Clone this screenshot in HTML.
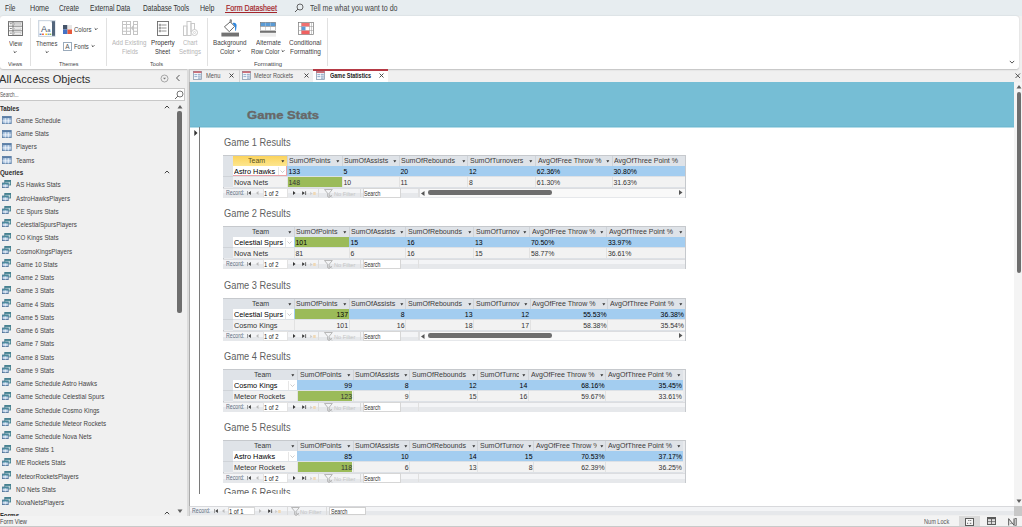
<!DOCTYPE html>
<html><head><meta charset="utf-8"><style>
html,body{margin:0;padding:0;}
body{width:1022px;height:527px;overflow:hidden;position:relative;background:#f0f0f0;font-family:"Liberation Sans",sans-serif;}
body>div,body>svg{position:absolute;}
.t{white-space:pre;line-height:1;transform-origin:0 0;}
</style></head><body>
<div style="left:0px;top:0px;width:1022px;height:16px;background:#e7edf0;"></div>
<div style="left:0px;top:69px;width:1022px;height:458px;background:#f0f0f0;"></div>
<div style="left:0px;top:15.7px;width:1019px;height:53px;background:#fff;border-radius:3px;box-shadow:0 0.6px 1.5px rgba(0,0,0,0.2);"></div>
<div class="t" style="left:5.00px;top:5.06px;font-size:8.2px;color:#333;transform:scaleX(0.7945);">File</div>
<div class="t" style="left:30.00px;top:5.06px;font-size:8.2px;color:#333;transform:scaleX(0.8685);">Home</div>
<div class="t" style="left:59.00px;top:5.06px;font-size:8.2px;color:#333;transform:scaleX(0.8126);">Create</div>
<div class="t" style="left:90.40px;top:5.06px;font-size:8.2px;color:#333;transform:scaleX(0.8112);">External Data</div>
<div class="t" style="left:142.50px;top:5.06px;font-size:8.2px;color:#333;transform:scaleX(0.8195);">Database Tools</div>
<div class="t" style="left:200.30px;top:5.06px;font-size:8.2px;color:#333;transform:scaleX(0.8596);">Help</div>
<div class="t" style="left:225.50px;top:5.06px;font-size:8.2px;color:#a4262c;transform:scaleX(0.8675);-webkit-text-stroke:0.2px #a4262c;">Form Datasheet</div>
<div style="left:225px;top:12.2px;width:52px;height:1.2px;background:#a4262c;"></div>
<div class="t" style="left:310.00px;top:5.06px;font-size:8.2px;color:#444;transform:scaleX(0.8667);">Tell me what you want to do</div>
<svg style="left:294px;top:3px" width="10" height="10" viewBox="0 0 10 10"><circle cx="6" cy="4" r="3" fill="none" stroke="#555" stroke-width="0.9"/><line x1="3.9" y1="6.1" x2="1" y2="9" stroke="#555" stroke-width="1"/></svg>
<div style="left:29.9px;top:18px;width:1px;height:48px;background:#e1e1e1;"></div>
<div style="left:106.3px;top:18px;width:1px;height:48px;background:#e1e1e1;"></div>
<div style="left:207px;top:18px;width:1px;height:48px;background:#e1e1e1;"></div>
<div style="left:327px;top:18px;width:1px;height:48px;background:#e1e1e1;"></div>
<div class="t" style="left:8.00px;top:60.82px;font-size:6.0px;color:#3f3f3f;transform:scaleX(0.8931);">Views</div>
<div class="t" style="left:59.00px;top:60.82px;font-size:6.0px;color:#3f3f3f;transform:scaleX(0.8997);">Themes</div>
<div class="t" style="left:150.00px;top:60.82px;font-size:6.0px;color:#3f3f3f;transform:scaleX(0.9278);">Tools</div>
<div class="t" style="left:253.50px;top:60.82px;font-size:6.0px;color:#3f3f3f;transform:scaleX(0.9764);">Formatting</div>
<div class="t" style="left:8.70px;top:39.81px;font-size:7.2px;color:#444;transform:scaleX(0.8527);">View</div>
<div class="t" style="left:36.00px;top:39.81px;font-size:7.2px;color:#444;transform:scaleX(0.8228);">Themes</div>
<div class="t" style="left:73.90px;top:26.21px;font-size:7.2px;color:#444;transform:scaleX(0.8411);">Colors</div>
<div class="t" style="left:73.90px;top:43.21px;font-size:7.2px;color:#444;transform:scaleX(0.8217);">Fonts</div>
<div class="t" style="left:112.40px;top:39.41px;font-size:7.2px;color:#b5b5b5;transform:scaleX(0.8595);">Add Existing</div>
<div class="t" style="left:121.50px;top:47.91px;font-size:7.2px;color:#b5b5b5;transform:scaleX(0.8329);">Fields</div>
<div class="t" style="left:151.00px;top:39.41px;font-size:7.2px;color:#333;transform:scaleX(0.8746);">Property</div>
<div class="t" style="left:155.00px;top:47.91px;font-size:7.2px;color:#333;transform:scaleX(0.7972);">Sheet</div>
<div class="t" style="left:183.00px;top:39.41px;font-size:7.2px;color:#b5b5b5;transform:scaleX(0.8236);">Chart</div>
<div class="t" style="left:179.00px;top:47.91px;font-size:7.2px;color:#b5b5b5;transform:scaleX(0.8456);">Settings</div>
<div class="t" style="left:213.00px;top:39.41px;font-size:7.2px;color:#444;transform:scaleX(0.8743);">Background</div>
<div class="t" style="left:220.00px;top:47.91px;font-size:7.2px;color:#444;transform:scaleX(0.8427);">Color</div>
<div class="t" style="left:255.80px;top:39.41px;font-size:7.2px;color:#444;transform:scaleX(0.8674);">Alternate</div>
<div class="t" style="left:250.90px;top:47.91px;font-size:7.2px;color:#444;transform:scaleX(0.8480);">Row Color</div>
<div class="t" style="left:289.40px;top:39.41px;font-size:7.2px;color:#444;transform:scaleX(0.8993);">Conditional</div>
<div class="t" style="left:290.00px;top:47.91px;font-size:7.2px;color:#444;transform:scaleX(0.9008);">Formatting</div>
<svg style="left:12.3px;top:49.5px" width="6" height="4" viewBox="0 0 6 4"><polyline points="1.7,1.35 3,2.65 4.3,1.35" fill="none" stroke="#333" stroke-width="1"/></svg>
<svg style="left:43.8px;top:49.5px" width="6" height="4" viewBox="0 0 6 4"><polyline points="1.7,1.35 3,2.65 4.3,1.35" fill="none" stroke="#333" stroke-width="1"/></svg>
<svg style="left:92.6px;top:27.4px" width="6" height="4" viewBox="0 0 6 4"><polyline points="1.7,1.35 3,2.65 4.3,1.35" fill="none" stroke="#333" stroke-width="1"/></svg>
<svg style="left:90px;top:44.4px" width="6" height="4" viewBox="0 0 6 4"><polyline points="1.7,1.35 3,2.65 4.3,1.35" fill="none" stroke="#333" stroke-width="1"/></svg>
<svg style="left:236px;top:48.7px" width="6" height="4" viewBox="0 0 6 4"><polyline points="1.7,1.35 3,2.65 4.3,1.35" fill="none" stroke="#333" stroke-width="1"/></svg>
<svg style="left:280px;top:48.7px" width="6" height="4" viewBox="0 0 6 4"><polyline points="1.7,1.35 3,2.65 4.3,1.35" fill="none" stroke="#333" stroke-width="1"/></svg>
<svg style="left:1008.6px;top:59.5px" width="6" height="4" viewBox="0 0 6 4"><polyline points="0.7999999999999998,0.8999999999999999 3,3.1 5.2,0.8999999999999999" fill="none" stroke="#555" stroke-width="1"/></svg>
<svg style="left:8px;top:20.6px" width="15" height="15" viewBox="0 0 15 15">
<rect x="0.5" y="0.5" width="14" height="14" fill="#fff" stroke="#707070"/>
<rect x="0.5" y="0.5" width="14" height="1" fill="#9a9a9a"/>
<line x1="5" y1="0.5" x2="5" y2="14.5" stroke="#707070" stroke-width="0.9"/>
<line x1="0.5" y1="5.2" x2="14.5" y2="5.2" stroke="#707070" stroke-width="0.9"/>
<line x1="0.5" y1="9.8" x2="14.5" y2="9.8" stroke="#707070" stroke-width="0.9"/>
<rect x="6.5" y="2.3" width="6.5" height="1.5" fill="none" stroke="#b0b0b0" stroke-width="0.6"/><rect x="6.5" y="7" width="6.5" height="1.5" fill="none" stroke="#b0b0b0" stroke-width="0.6"/><rect x="6.5" y="11.6" width="6.5" height="1.5" fill="none" stroke="#b0b0b0" stroke-width="0.6"/>
<rect x="1.8" y="2.4" width="2" height="0.8" fill="#666"/><rect x="1.8" y="7.1" width="2" height="0.8" fill="#666"/><rect x="1.8" y="11.7" width="2" height="0.8" fill="#666"/>
</svg>
<svg style="left:38.3px;top:19.8px" width="18" height="17" viewBox="0 0 18 17">
<rect x="0" y="0" width="17.5" height="17" fill="#cfd8e2"/>
<rect x="1.3" y="1.2" width="12.7" height="14.6" fill="#fff"/>
<rect x="14" y="1.2" width="3" height="14.6" fill="#52657c"/>
<path d="M12.2 1.2 L14 1.2 L14 3 Z" fill="#b9c6d4"/>
<text x="3" y="11.5" font-family="Liberation Sans" font-size="9" fill="#44546a">A</text>
<text x="9.3" y="11.6" font-family="Liberation Sans" font-size="5.8" fill="#44546a">a</text>
<rect x="1.6" y="13.6" width="1.9" height="1.3" fill="#4472c4"/><rect x="4" y="13.6" width="1.9" height="1.3" fill="#e8553e"/><rect x="7.3" y="13.6" width="1.9" height="1.3" fill="#ffc000"/><rect x="9.6" y="13.6" width="1.9" height="1.3" fill="#5b9bd5"/><rect x="11.8" y="13.6" width="1.5" height="1.3" fill="#70ad47"/>
</svg>
<svg style="left:63px;top:24.5px" width="9" height="9" viewBox="0 0 9 9">
<rect x="0" y="0" width="4.5" height="4.5" fill="#44546a"/><rect x="4.5" y="0" width="4.5" height="4.5" fill="#e7e6e6"/>
<rect x="0" y="4.5" width="4.5" height="4.5" fill="#4472c4"/><rect x="4.5" y="4.5" width="4.5" height="4.5" fill="#e65a3c"/>
</svg>
<svg style="left:63px;top:42px" width="9" height="9" viewBox="0 0 9 9">
<rect x="0.5" y="0.5" width="8" height="8" fill="#fff" stroke="#9aaabb"/>
<text x="2.2" y="7.2" font-family="Liberation Sans" font-size="6.5" fill="#555">A</text>
</svg>
<svg style="left:122px;top:21px" width="16" height="14" viewBox="0 0 16 14">
<rect x="0.5" y="0.5" width="8" height="13" fill="none" stroke="#c4c4c4"/>
<line x1="0.5" y1="3.5" x2="8.5" y2="3.5" stroke="#c4c4c4"/><line x1="0.5" y1="7" x2="8.5" y2="7" stroke="#c4c4c4"/><line x1="0.5" y1="10.3" x2="8.5" y2="10.3" stroke="#c4c4c4"/><line x1="4.5" y1="0.5" x2="4.5" y2="13.5" stroke="#c4c4c4"/>
<rect x="11.5" y="0.5" width="4" height="13" fill="none" stroke="#c4c4c4"/>
<line x1="11.5" y1="3.5" x2="15.5" y2="3.5" stroke="#c4c4c4"/><line x1="11.5" y1="7" x2="15.5" y2="7" stroke="#c4c4c4"/><line x1="11.5" y1="10.3" x2="15.5" y2="10.3" stroke="#c4c4c4"/>
<path d="M11 4.5 L8.8 7 L11 9.5 Z" fill="#c4c4c4"/>
</svg>
<svg style="left:157px;top:20.5px" width="12" height="15" viewBox="0 0 12 15">
<rect x="0.5" y="0.5" width="11" height="14" fill="#fff" stroke="#6a6a6a" stroke-width="0.9"/>
<circle cx="3" cy="4" r="0.9" fill="none" stroke="#666" stroke-width="0.7"/><line x1="4.5" y1="4" x2="9.5" y2="4" stroke="#777" stroke-width="0.8"/>
<circle cx="3" cy="7" r="0.9" fill="none" stroke="#666" stroke-width="0.7"/><line x1="4.5" y1="7" x2="9.5" y2="7" stroke="#777" stroke-width="0.8"/>
<circle cx="3" cy="10" r="0.9" fill="none" stroke="#666" stroke-width="0.7"/><line x1="4.5" y1="10" x2="9.5" y2="10" stroke="#777" stroke-width="0.8"/>
</svg>
<svg style="left:183px;top:21px" width="16" height="16" viewBox="0 0 16 16">
<rect x="0.5" y="5" width="3.5" height="9.5" fill="none" stroke="#c9c9c9"/>
<rect x="4" y="0.5" width="4" height="14" fill="none" stroke="#c9c9c9"/>
<rect x="8" y="2.5" width="3.5" height="8" fill="none" stroke="#c9c9c9"/>
<circle cx="11.5" cy="11.5" r="3" fill="#fff" stroke="#c9c9c9"/><circle cx="11.5" cy="11.5" r="1" fill="none" stroke="#c9c9c9" stroke-width="0.7"/>
</svg>
<svg style="left:221px;top:19px" width="19" height="18" viewBox="0 0 19 18">
<path d="M3.4 7.8 L9.2 2.9 L13.6 7.3 L8.3 12.7 Z" fill="#fff" stroke="#555" stroke-width="0.9" stroke-linejoin="round"/>
<path d="M9.2 2.9 L9.2 0.8 L10.3 0.8 L10.3 3.6" fill="none" stroke="#555" stroke-width="0.8"/>
<path d="M11.5 4.2 C13.5 3.2 15.5 4.2 15.6 6.5 L15 11.8 L14.2 11.8 L13.9 7.6 Z" fill="#2f86dd"/>
<rect x="0.4" y="13.6" width="17.6" height="3.9" fill="#737373"/>
</svg>
<svg style="left:260px;top:22px" width="16" height="15" viewBox="0 0 16 15">
<rect x="0.5" y="0.5" width="15" height="4" fill="#5b9bd5" stroke="#6d6d6d" stroke-width="0.6"/>
<line x1="5.5" y1="0.5" x2="5.5" y2="4.5" stroke="#bcd" stroke-width="0.5"/><line x1="10.5" y1="0.5" x2="10.5" y2="4.5" stroke="#bcd" stroke-width="0.5"/>
<rect x="0.5" y="4.5" width="15" height="4" fill="#fff" stroke="#9a9a9a" stroke-width="0.6"/>
<line x1="5.5" y1="4.5" x2="5.5" y2="8.5" stroke="#aaa" stroke-width="0.5"/><line x1="10.5" y1="4.5" x2="10.5" y2="8.5" stroke="#aaa" stroke-width="0.5"/>
<rect x="0" y="9" width="16" height="1.8" fill="#707070"/>
<rect x="-1" y="11.2" width="18" height="3.5" fill="#ededed"/>
</svg>
<svg style="left:298px;top:22px" width="16" height="13" viewBox="0 0 16 13">
<rect x="0.5" y="0.5" width="15" height="12" fill="#fff" stroke="#777" stroke-width="0.7"/>
<line x1="0.5" y1="4.5" x2="15.5" y2="4.5" stroke="#999" stroke-width="0.5"/><line x1="0.5" y1="8.5" x2="15.5" y2="8.5" stroke="#999" stroke-width="0.5"/>
<line x1="3.5" y1="0.5" x2="3.5" y2="12.5" stroke="#999" stroke-width="0.5"/><line x1="11.5" y1="0.5" x2="11.5" y2="12.5" stroke="#999" stroke-width="0.5"/><line x1="13.5" y1="0.5" x2="13.5" y2="12.5" stroke="#999" stroke-width="0.5"/>
<rect x="3.5" y="1" width="8" height="3.4" fill="#f07070"/>
<rect x="3.5" y="4.6" width="4" height="3.8" fill="#5b9bd5"/>
<rect x="3.5" y="8.6" width="8" height="3.6" fill="#f06060"/>
</svg>
<div style="left:187px;top:69px;width:2px;height:447px;background:#dcdcdc;"></div>
<div style="left:188.5px;top:69px;width:1px;height:447px;background:#c8c8c8;"></div>
<div class="t" style="left:-0.80px;top:73.77px;font-size:11.5px;color:#2f2f2f;transform:scaleX(0.9662);">All Access Objects</div>
<svg style="left:160px;top:73.5px" width="9" height="9" viewBox="0 0 9 9"><circle cx="4.5" cy="4.5" r="3.5" fill="none" stroke="#888" stroke-width="0.7"/><path d="M3 3.8 L6 3.8 L4.5 5.6 Z" fill="#777"/></svg>
<svg style="left:175px;top:74px" width="6" height="8" viewBox="0 0 6 8"><polyline points="4.5,1 1.5,4 4.5,7" fill="none" stroke="#444" stroke-width="0.9"/></svg>
<div style="left:0px;top:88px;width:185px;height:12.5px;background:#fff;box-sizing:border-box;border:1px solid #c8c8c8;border-left:none;"></div>
<div class="t" style="left:0.00px;top:92.18px;font-size:6.4px;color:#555;transform:scaleX(0.7261);">Search...</div>
<svg style="left:174px;top:89.5px" width="10" height="10" viewBox="0 0 10 10"><circle cx="6" cy="4" r="3" fill="none" stroke="#555" stroke-width="0.8"/><line x1="3.9" y1="6.1" x2="1" y2="9" stroke="#555" stroke-width="0.9"/></svg>
<svg style="left:177px;top:104px" width="6" height="5" viewBox="0 0 6 5"><path d="M0.5 4.5 L3 1 L5.5 4.5 Z" fill="#606060"/></svg>
<div style="left:177.4px;top:111px;width:4.4px;height:202px;background:#6e6e6e;border-radius:2px;"></div>
<svg style="left:177px;top:509px" width="6" height="5" viewBox="0 0 6 5"><path d="M0.5 0.5 L3 4 L5.5 0.5 Z" fill="#606060"/></svg>
<svg style="left:163.5px;top:105px" width="6" height="4" viewBox="0 0 6 4"><polyline points="0.8,3.2 3,1 5.2,3.2" fill="none" stroke="#444" stroke-width="1"/></svg>
<svg style="left:163.5px;top:169.5px" width="6" height="4" viewBox="0 0 6 4"><polyline points="0.8,3.2 3,1 5.2,3.2" fill="none" stroke="#444" stroke-width="1"/></svg>
<svg style="left:163.5px;top:511px" width="6" height="4" viewBox="0 0 6 4"><polyline points="0.8,3.2 3,1 5.2,3.2" fill="none" stroke="#444" stroke-width="1"/></svg>
<div class="t" style="left:0.10px;top:105.64px;font-size:6.8px;color:#2b2b2b;font-weight:700;transform:scaleX(0.9174);">Tables</div>
<svg style="left:1.5px;top:116.3px" width="10" height="8" viewBox="0 0 10 8"><rect x="0.4" y="0.4" width="8.8" height="7.2" fill="#a9c3e0" stroke="#5b7ea6" stroke-width="0.8"/><rect x="0.4" y="0.4" width="8.8" height="1.8" fill="#5b7ea6"/><line x1="3.3" y1="2.2" x2="3.3" y2="7.6" stroke="#fff" stroke-width="0.7"/><line x1="6.3" y1="2.2" x2="6.3" y2="7.6" stroke="#fff" stroke-width="0.7"/><line x1="0.4" y1="4.9" x2="9.2" y2="4.9" stroke="#fff" stroke-width="0.7"/></svg>
<div class="t" style="left:16.10px;top:117.93px;font-size:6.7px;color:#444;transform:scaleX(0.9320);">Game Schedule</div>
<svg style="left:1.5px;top:129.57px" width="10" height="8" viewBox="0 0 10 8"><rect x="0.4" y="0.4" width="8.8" height="7.2" fill="#a9c3e0" stroke="#5b7ea6" stroke-width="0.8"/><rect x="0.4" y="0.4" width="8.8" height="1.8" fill="#5b7ea6"/><line x1="3.3" y1="2.2" x2="3.3" y2="7.6" stroke="#fff" stroke-width="0.7"/><line x1="6.3" y1="2.2" x2="6.3" y2="7.6" stroke="#fff" stroke-width="0.7"/><line x1="0.4" y1="4.9" x2="9.2" y2="4.9" stroke="#fff" stroke-width="0.7"/></svg>
<div class="t" style="left:16.10px;top:131.20px;font-size:6.7px;color:#444;transform:scaleX(0.9320);">Game Stats</div>
<svg style="left:1.5px;top:142.83999999999997px" width="10" height="8" viewBox="0 0 10 8"><rect x="0.4" y="0.4" width="8.8" height="7.2" fill="#a9c3e0" stroke="#5b7ea6" stroke-width="0.8"/><rect x="0.4" y="0.4" width="8.8" height="1.8" fill="#5b7ea6"/><line x1="3.3" y1="2.2" x2="3.3" y2="7.6" stroke="#fff" stroke-width="0.7"/><line x1="6.3" y1="2.2" x2="6.3" y2="7.6" stroke="#fff" stroke-width="0.7"/><line x1="0.4" y1="4.9" x2="9.2" y2="4.9" stroke="#fff" stroke-width="0.7"/></svg>
<div class="t" style="left:16.10px;top:144.47px;font-size:6.7px;color:#444;transform:scaleX(0.9320);">Players</div>
<svg style="left:1.5px;top:156.10999999999999px" width="10" height="8" viewBox="0 0 10 8"><rect x="0.4" y="0.4" width="8.8" height="7.2" fill="#a9c3e0" stroke="#5b7ea6" stroke-width="0.8"/><rect x="0.4" y="0.4" width="8.8" height="1.8" fill="#5b7ea6"/><line x1="3.3" y1="2.2" x2="3.3" y2="7.6" stroke="#fff" stroke-width="0.7"/><line x1="6.3" y1="2.2" x2="6.3" y2="7.6" stroke="#fff" stroke-width="0.7"/><line x1="0.4" y1="4.9" x2="9.2" y2="4.9" stroke="#fff" stroke-width="0.7"/></svg>
<div class="t" style="left:16.10px;top:157.74px;font-size:6.7px;color:#444;transform:scaleX(0.9320);">Teams</div>
<div class="t" style="left:0.10px;top:170.04px;font-size:6.8px;color:#2b2b2b;font-weight:700;transform:scaleX(0.9200);">Queries</div>
<svg style="left:1.5px;top:179.7px" width="9" height="8" viewBox="0 0 9 8"><rect x="2.8" y="0.4" width="5.8" height="4.6" fill="#b5d6d6" stroke="#3d7a8a" stroke-width="0.8"/><rect x="2.8" y="0.4" width="5.8" height="1.4" fill="#3d7a8a"/><rect x="0.4" y="3" width="5.8" height="4.6" fill="#a9c3e0" stroke="#4a6f96" stroke-width="0.8"/><rect x="0.4" y="3" width="5.8" height="1.4" fill="#4a8a9a"/><line x1="0.4" y1="5.9" x2="6.2" y2="5.9" stroke="#fff" stroke-width="0.6"/><line x1="3.3" y1="4.4" x2="3.3" y2="7.6" stroke="#fff" stroke-width="0.6"/></svg>
<div class="t" style="left:16.10px;top:182.43px;font-size:6.7px;color:#444;transform:scaleX(0.9320);">AS Hawks Stats</div>
<svg style="left:1.5px;top:192.94px" width="9" height="8" viewBox="0 0 9 8"><rect x="2.8" y="0.4" width="5.8" height="4.6" fill="#b5d6d6" stroke="#3d7a8a" stroke-width="0.8"/><rect x="2.8" y="0.4" width="5.8" height="1.4" fill="#3d7a8a"/><rect x="0.4" y="3" width="5.8" height="4.6" fill="#a9c3e0" stroke="#4a6f96" stroke-width="0.8"/><rect x="0.4" y="3" width="5.8" height="1.4" fill="#4a8a9a"/><line x1="0.4" y1="5.9" x2="6.2" y2="5.9" stroke="#fff" stroke-width="0.6"/><line x1="3.3" y1="4.4" x2="3.3" y2="7.6" stroke="#fff" stroke-width="0.6"/></svg>
<div class="t" style="left:16.10px;top:195.67px;font-size:6.7px;color:#444;transform:scaleX(0.9320);">AstroHawksPlayers</div>
<svg style="left:1.5px;top:206.17999999999998px" width="9" height="8" viewBox="0 0 9 8"><rect x="2.8" y="0.4" width="5.8" height="4.6" fill="#b5d6d6" stroke="#3d7a8a" stroke-width="0.8"/><rect x="2.8" y="0.4" width="5.8" height="1.4" fill="#3d7a8a"/><rect x="0.4" y="3" width="5.8" height="4.6" fill="#a9c3e0" stroke="#4a6f96" stroke-width="0.8"/><rect x="0.4" y="3" width="5.8" height="1.4" fill="#4a8a9a"/><line x1="0.4" y1="5.9" x2="6.2" y2="5.9" stroke="#fff" stroke-width="0.6"/><line x1="3.3" y1="4.4" x2="3.3" y2="7.6" stroke="#fff" stroke-width="0.6"/></svg>
<div class="t" style="left:16.10px;top:208.91px;font-size:6.7px;color:#444;transform:scaleX(0.9320);">CE Spurs Stats</div>
<svg style="left:1.5px;top:219.42px" width="9" height="8" viewBox="0 0 9 8"><rect x="2.8" y="0.4" width="5.8" height="4.6" fill="#b5d6d6" stroke="#3d7a8a" stroke-width="0.8"/><rect x="2.8" y="0.4" width="5.8" height="1.4" fill="#3d7a8a"/><rect x="0.4" y="3" width="5.8" height="4.6" fill="#a9c3e0" stroke="#4a6f96" stroke-width="0.8"/><rect x="0.4" y="3" width="5.8" height="1.4" fill="#4a8a9a"/><line x1="0.4" y1="5.9" x2="6.2" y2="5.9" stroke="#fff" stroke-width="0.6"/><line x1="3.3" y1="4.4" x2="3.3" y2="7.6" stroke="#fff" stroke-width="0.6"/></svg>
<div class="t" style="left:16.10px;top:222.15px;font-size:6.7px;color:#444;transform:scaleX(0.9320);">CelestialSpursPlayers</div>
<svg style="left:1.5px;top:232.66px" width="9" height="8" viewBox="0 0 9 8"><rect x="2.8" y="0.4" width="5.8" height="4.6" fill="#b5d6d6" stroke="#3d7a8a" stroke-width="0.8"/><rect x="2.8" y="0.4" width="5.8" height="1.4" fill="#3d7a8a"/><rect x="0.4" y="3" width="5.8" height="4.6" fill="#a9c3e0" stroke="#4a6f96" stroke-width="0.8"/><rect x="0.4" y="3" width="5.8" height="1.4" fill="#4a8a9a"/><line x1="0.4" y1="5.9" x2="6.2" y2="5.9" stroke="#fff" stroke-width="0.6"/><line x1="3.3" y1="4.4" x2="3.3" y2="7.6" stroke="#fff" stroke-width="0.6"/></svg>
<div class="t" style="left:16.10px;top:235.39px;font-size:6.7px;color:#444;transform:scaleX(0.9320);">CO Kings Stats</div>
<svg style="left:1.5px;top:245.9px" width="9" height="8" viewBox="0 0 9 8"><rect x="2.8" y="0.4" width="5.8" height="4.6" fill="#b5d6d6" stroke="#3d7a8a" stroke-width="0.8"/><rect x="2.8" y="0.4" width="5.8" height="1.4" fill="#3d7a8a"/><rect x="0.4" y="3" width="5.8" height="4.6" fill="#a9c3e0" stroke="#4a6f96" stroke-width="0.8"/><rect x="0.4" y="3" width="5.8" height="1.4" fill="#4a8a9a"/><line x1="0.4" y1="5.9" x2="6.2" y2="5.9" stroke="#fff" stroke-width="0.6"/><line x1="3.3" y1="4.4" x2="3.3" y2="7.6" stroke="#fff" stroke-width="0.6"/></svg>
<div class="t" style="left:16.10px;top:248.63px;font-size:6.7px;color:#444;transform:scaleX(0.9320);">CosmoKingsPlayers</div>
<svg style="left:1.5px;top:259.14px" width="9" height="8" viewBox="0 0 9 8"><rect x="2.8" y="0.4" width="5.8" height="4.6" fill="#b5d6d6" stroke="#3d7a8a" stroke-width="0.8"/><rect x="2.8" y="0.4" width="5.8" height="1.4" fill="#3d7a8a"/><rect x="0.4" y="3" width="5.8" height="4.6" fill="#a9c3e0" stroke="#4a6f96" stroke-width="0.8"/><rect x="0.4" y="3" width="5.8" height="1.4" fill="#4a8a9a"/><line x1="0.4" y1="5.9" x2="6.2" y2="5.9" stroke="#fff" stroke-width="0.6"/><line x1="3.3" y1="4.4" x2="3.3" y2="7.6" stroke="#fff" stroke-width="0.6"/></svg>
<div class="t" style="left:16.10px;top:261.87px;font-size:6.7px;color:#444;transform:scaleX(0.9320);">Game 10 Stats</div>
<svg style="left:1.5px;top:272.38px" width="9" height="8" viewBox="0 0 9 8"><rect x="2.8" y="0.4" width="5.8" height="4.6" fill="#b5d6d6" stroke="#3d7a8a" stroke-width="0.8"/><rect x="2.8" y="0.4" width="5.8" height="1.4" fill="#3d7a8a"/><rect x="0.4" y="3" width="5.8" height="4.6" fill="#a9c3e0" stroke="#4a6f96" stroke-width="0.8"/><rect x="0.4" y="3" width="5.8" height="1.4" fill="#4a8a9a"/><line x1="0.4" y1="5.9" x2="6.2" y2="5.9" stroke="#fff" stroke-width="0.6"/><line x1="3.3" y1="4.4" x2="3.3" y2="7.6" stroke="#fff" stroke-width="0.6"/></svg>
<div class="t" style="left:16.10px;top:275.11px;font-size:6.7px;color:#444;transform:scaleX(0.9320);">Game 2 Stats</div>
<svg style="left:1.5px;top:285.62px" width="9" height="8" viewBox="0 0 9 8"><rect x="2.8" y="0.4" width="5.8" height="4.6" fill="#b5d6d6" stroke="#3d7a8a" stroke-width="0.8"/><rect x="2.8" y="0.4" width="5.8" height="1.4" fill="#3d7a8a"/><rect x="0.4" y="3" width="5.8" height="4.6" fill="#a9c3e0" stroke="#4a6f96" stroke-width="0.8"/><rect x="0.4" y="3" width="5.8" height="1.4" fill="#4a8a9a"/><line x1="0.4" y1="5.9" x2="6.2" y2="5.9" stroke="#fff" stroke-width="0.6"/><line x1="3.3" y1="4.4" x2="3.3" y2="7.6" stroke="#fff" stroke-width="0.6"/></svg>
<div class="t" style="left:16.10px;top:288.35px;font-size:6.7px;color:#444;transform:scaleX(0.9320);">Game 3 Stats</div>
<svg style="left:1.5px;top:298.86px" width="9" height="8" viewBox="0 0 9 8"><rect x="2.8" y="0.4" width="5.8" height="4.6" fill="#b5d6d6" stroke="#3d7a8a" stroke-width="0.8"/><rect x="2.8" y="0.4" width="5.8" height="1.4" fill="#3d7a8a"/><rect x="0.4" y="3" width="5.8" height="4.6" fill="#a9c3e0" stroke="#4a6f96" stroke-width="0.8"/><rect x="0.4" y="3" width="5.8" height="1.4" fill="#4a8a9a"/><line x1="0.4" y1="5.9" x2="6.2" y2="5.9" stroke="#fff" stroke-width="0.6"/><line x1="3.3" y1="4.4" x2="3.3" y2="7.6" stroke="#fff" stroke-width="0.6"/></svg>
<div class="t" style="left:16.10px;top:301.59px;font-size:6.7px;color:#444;transform:scaleX(0.9320);">Game 4 Stats</div>
<svg style="left:1.5px;top:312.1px" width="9" height="8" viewBox="0 0 9 8"><rect x="2.8" y="0.4" width="5.8" height="4.6" fill="#b5d6d6" stroke="#3d7a8a" stroke-width="0.8"/><rect x="2.8" y="0.4" width="5.8" height="1.4" fill="#3d7a8a"/><rect x="0.4" y="3" width="5.8" height="4.6" fill="#a9c3e0" stroke="#4a6f96" stroke-width="0.8"/><rect x="0.4" y="3" width="5.8" height="1.4" fill="#4a8a9a"/><line x1="0.4" y1="5.9" x2="6.2" y2="5.9" stroke="#fff" stroke-width="0.6"/><line x1="3.3" y1="4.4" x2="3.3" y2="7.6" stroke="#fff" stroke-width="0.6"/></svg>
<div class="t" style="left:16.10px;top:314.83px;font-size:6.7px;color:#444;transform:scaleX(0.9320);">Game 5 Stats</div>
<svg style="left:1.5px;top:325.34000000000003px" width="9" height="8" viewBox="0 0 9 8"><rect x="2.8" y="0.4" width="5.8" height="4.6" fill="#b5d6d6" stroke="#3d7a8a" stroke-width="0.8"/><rect x="2.8" y="0.4" width="5.8" height="1.4" fill="#3d7a8a"/><rect x="0.4" y="3" width="5.8" height="4.6" fill="#a9c3e0" stroke="#4a6f96" stroke-width="0.8"/><rect x="0.4" y="3" width="5.8" height="1.4" fill="#4a8a9a"/><line x1="0.4" y1="5.9" x2="6.2" y2="5.9" stroke="#fff" stroke-width="0.6"/><line x1="3.3" y1="4.4" x2="3.3" y2="7.6" stroke="#fff" stroke-width="0.6"/></svg>
<div class="t" style="left:16.10px;top:328.07px;font-size:6.7px;color:#444;transform:scaleX(0.9320);">Game 6 Stats</div>
<svg style="left:1.5px;top:338.58000000000004px" width="9" height="8" viewBox="0 0 9 8"><rect x="2.8" y="0.4" width="5.8" height="4.6" fill="#b5d6d6" stroke="#3d7a8a" stroke-width="0.8"/><rect x="2.8" y="0.4" width="5.8" height="1.4" fill="#3d7a8a"/><rect x="0.4" y="3" width="5.8" height="4.6" fill="#a9c3e0" stroke="#4a6f96" stroke-width="0.8"/><rect x="0.4" y="3" width="5.8" height="1.4" fill="#4a8a9a"/><line x1="0.4" y1="5.9" x2="6.2" y2="5.9" stroke="#fff" stroke-width="0.6"/><line x1="3.3" y1="4.4" x2="3.3" y2="7.6" stroke="#fff" stroke-width="0.6"/></svg>
<div class="t" style="left:16.10px;top:341.31px;font-size:6.7px;color:#444;transform:scaleX(0.9320);">Game 7 Stats</div>
<svg style="left:1.5px;top:351.82000000000005px" width="9" height="8" viewBox="0 0 9 8"><rect x="2.8" y="0.4" width="5.8" height="4.6" fill="#b5d6d6" stroke="#3d7a8a" stroke-width="0.8"/><rect x="2.8" y="0.4" width="5.8" height="1.4" fill="#3d7a8a"/><rect x="0.4" y="3" width="5.8" height="4.6" fill="#a9c3e0" stroke="#4a6f96" stroke-width="0.8"/><rect x="0.4" y="3" width="5.8" height="1.4" fill="#4a8a9a"/><line x1="0.4" y1="5.9" x2="6.2" y2="5.9" stroke="#fff" stroke-width="0.6"/><line x1="3.3" y1="4.4" x2="3.3" y2="7.6" stroke="#fff" stroke-width="0.6"/></svg>
<div class="t" style="left:16.10px;top:354.55px;font-size:6.7px;color:#444;transform:scaleX(0.9320);">Game 8 Stats</div>
<svg style="left:1.5px;top:365.06000000000006px" width="9" height="8" viewBox="0 0 9 8"><rect x="2.8" y="0.4" width="5.8" height="4.6" fill="#b5d6d6" stroke="#3d7a8a" stroke-width="0.8"/><rect x="2.8" y="0.4" width="5.8" height="1.4" fill="#3d7a8a"/><rect x="0.4" y="3" width="5.8" height="4.6" fill="#a9c3e0" stroke="#4a6f96" stroke-width="0.8"/><rect x="0.4" y="3" width="5.8" height="1.4" fill="#4a8a9a"/><line x1="0.4" y1="5.9" x2="6.2" y2="5.9" stroke="#fff" stroke-width="0.6"/><line x1="3.3" y1="4.4" x2="3.3" y2="7.6" stroke="#fff" stroke-width="0.6"/></svg>
<div class="t" style="left:16.10px;top:367.79px;font-size:6.7px;color:#444;transform:scaleX(0.9320);">Game 9 Stats</div>
<svg style="left:1.5px;top:378.3px" width="9" height="8" viewBox="0 0 9 8"><rect x="2.8" y="0.4" width="5.8" height="4.6" fill="#b5d6d6" stroke="#3d7a8a" stroke-width="0.8"/><rect x="2.8" y="0.4" width="5.8" height="1.4" fill="#3d7a8a"/><rect x="0.4" y="3" width="5.8" height="4.6" fill="#a9c3e0" stroke="#4a6f96" stroke-width="0.8"/><rect x="0.4" y="3" width="5.8" height="1.4" fill="#4a8a9a"/><line x1="0.4" y1="5.9" x2="6.2" y2="5.9" stroke="#fff" stroke-width="0.6"/><line x1="3.3" y1="4.4" x2="3.3" y2="7.6" stroke="#fff" stroke-width="0.6"/></svg>
<div class="t" style="left:16.10px;top:381.03px;font-size:6.7px;color:#444;transform:scaleX(0.9320);">Game Schedule Astro Hawks</div>
<svg style="left:1.5px;top:391.54px" width="9" height="8" viewBox="0 0 9 8"><rect x="2.8" y="0.4" width="5.8" height="4.6" fill="#b5d6d6" stroke="#3d7a8a" stroke-width="0.8"/><rect x="2.8" y="0.4" width="5.8" height="1.4" fill="#3d7a8a"/><rect x="0.4" y="3" width="5.8" height="4.6" fill="#a9c3e0" stroke="#4a6f96" stroke-width="0.8"/><rect x="0.4" y="3" width="5.8" height="1.4" fill="#4a8a9a"/><line x1="0.4" y1="5.9" x2="6.2" y2="5.9" stroke="#fff" stroke-width="0.6"/><line x1="3.3" y1="4.4" x2="3.3" y2="7.6" stroke="#fff" stroke-width="0.6"/></svg>
<div class="t" style="left:16.10px;top:394.27px;font-size:6.7px;color:#444;transform:scaleX(0.9320);">Game Schedule Celestial Spurs</div>
<svg style="left:1.5px;top:404.78000000000003px" width="9" height="8" viewBox="0 0 9 8"><rect x="2.8" y="0.4" width="5.8" height="4.6" fill="#b5d6d6" stroke="#3d7a8a" stroke-width="0.8"/><rect x="2.8" y="0.4" width="5.8" height="1.4" fill="#3d7a8a"/><rect x="0.4" y="3" width="5.8" height="4.6" fill="#a9c3e0" stroke="#4a6f96" stroke-width="0.8"/><rect x="0.4" y="3" width="5.8" height="1.4" fill="#4a8a9a"/><line x1="0.4" y1="5.9" x2="6.2" y2="5.9" stroke="#fff" stroke-width="0.6"/><line x1="3.3" y1="4.4" x2="3.3" y2="7.6" stroke="#fff" stroke-width="0.6"/></svg>
<div class="t" style="left:16.10px;top:407.51px;font-size:6.7px;color:#444;transform:scaleX(0.9320);">Game Schedule Cosmo Kings</div>
<svg style="left:1.5px;top:418.02px" width="9" height="8" viewBox="0 0 9 8"><rect x="2.8" y="0.4" width="5.8" height="4.6" fill="#b5d6d6" stroke="#3d7a8a" stroke-width="0.8"/><rect x="2.8" y="0.4" width="5.8" height="1.4" fill="#3d7a8a"/><rect x="0.4" y="3" width="5.8" height="4.6" fill="#a9c3e0" stroke="#4a6f96" stroke-width="0.8"/><rect x="0.4" y="3" width="5.8" height="1.4" fill="#4a8a9a"/><line x1="0.4" y1="5.9" x2="6.2" y2="5.9" stroke="#fff" stroke-width="0.6"/><line x1="3.3" y1="4.4" x2="3.3" y2="7.6" stroke="#fff" stroke-width="0.6"/></svg>
<div class="t" style="left:16.10px;top:420.75px;font-size:6.7px;color:#444;transform:scaleX(0.9320);">Game Schedule Meteor Rockets</div>
<svg style="left:1.5px;top:431.26px" width="9" height="8" viewBox="0 0 9 8"><rect x="2.8" y="0.4" width="5.8" height="4.6" fill="#b5d6d6" stroke="#3d7a8a" stroke-width="0.8"/><rect x="2.8" y="0.4" width="5.8" height="1.4" fill="#3d7a8a"/><rect x="0.4" y="3" width="5.8" height="4.6" fill="#a9c3e0" stroke="#4a6f96" stroke-width="0.8"/><rect x="0.4" y="3" width="5.8" height="1.4" fill="#4a8a9a"/><line x1="0.4" y1="5.9" x2="6.2" y2="5.9" stroke="#fff" stroke-width="0.6"/><line x1="3.3" y1="4.4" x2="3.3" y2="7.6" stroke="#fff" stroke-width="0.6"/></svg>
<div class="t" style="left:16.10px;top:433.99px;font-size:6.7px;color:#444;transform:scaleX(0.9320);">Game Schedule Nova Nets</div>
<svg style="left:1.5px;top:444.5px" width="9" height="8" viewBox="0 0 9 8"><rect x="2.8" y="0.4" width="5.8" height="4.6" fill="#b5d6d6" stroke="#3d7a8a" stroke-width="0.8"/><rect x="2.8" y="0.4" width="5.8" height="1.4" fill="#3d7a8a"/><rect x="0.4" y="3" width="5.8" height="4.6" fill="#a9c3e0" stroke="#4a6f96" stroke-width="0.8"/><rect x="0.4" y="3" width="5.8" height="1.4" fill="#4a8a9a"/><line x1="0.4" y1="5.9" x2="6.2" y2="5.9" stroke="#fff" stroke-width="0.6"/><line x1="3.3" y1="4.4" x2="3.3" y2="7.6" stroke="#fff" stroke-width="0.6"/></svg>
<div class="t" style="left:16.10px;top:447.23px;font-size:6.7px;color:#444;transform:scaleX(0.9320);">Game Stats 1</div>
<svg style="left:1.5px;top:457.74px" width="9" height="8" viewBox="0 0 9 8"><rect x="2.8" y="0.4" width="5.8" height="4.6" fill="#b5d6d6" stroke="#3d7a8a" stroke-width="0.8"/><rect x="2.8" y="0.4" width="5.8" height="1.4" fill="#3d7a8a"/><rect x="0.4" y="3" width="5.8" height="4.6" fill="#a9c3e0" stroke="#4a6f96" stroke-width="0.8"/><rect x="0.4" y="3" width="5.8" height="1.4" fill="#4a8a9a"/><line x1="0.4" y1="5.9" x2="6.2" y2="5.9" stroke="#fff" stroke-width="0.6"/><line x1="3.3" y1="4.4" x2="3.3" y2="7.6" stroke="#fff" stroke-width="0.6"/></svg>
<div class="t" style="left:16.10px;top:460.47px;font-size:6.7px;color:#444;transform:scaleX(0.9320);">ME Rockets Stats</div>
<svg style="left:1.5px;top:470.98px" width="9" height="8" viewBox="0 0 9 8"><rect x="2.8" y="0.4" width="5.8" height="4.6" fill="#b5d6d6" stroke="#3d7a8a" stroke-width="0.8"/><rect x="2.8" y="0.4" width="5.8" height="1.4" fill="#3d7a8a"/><rect x="0.4" y="3" width="5.8" height="4.6" fill="#a9c3e0" stroke="#4a6f96" stroke-width="0.8"/><rect x="0.4" y="3" width="5.8" height="1.4" fill="#4a8a9a"/><line x1="0.4" y1="5.9" x2="6.2" y2="5.9" stroke="#fff" stroke-width="0.6"/><line x1="3.3" y1="4.4" x2="3.3" y2="7.6" stroke="#fff" stroke-width="0.6"/></svg>
<div class="t" style="left:16.10px;top:473.71px;font-size:6.7px;color:#444;transform:scaleX(0.9320);">MeteorRocketsPlayers</div>
<svg style="left:1.5px;top:484.22px" width="9" height="8" viewBox="0 0 9 8"><rect x="2.8" y="0.4" width="5.8" height="4.6" fill="#b5d6d6" stroke="#3d7a8a" stroke-width="0.8"/><rect x="2.8" y="0.4" width="5.8" height="1.4" fill="#3d7a8a"/><rect x="0.4" y="3" width="5.8" height="4.6" fill="#a9c3e0" stroke="#4a6f96" stroke-width="0.8"/><rect x="0.4" y="3" width="5.8" height="1.4" fill="#4a8a9a"/><line x1="0.4" y1="5.9" x2="6.2" y2="5.9" stroke="#fff" stroke-width="0.6"/><line x1="3.3" y1="4.4" x2="3.3" y2="7.6" stroke="#fff" stroke-width="0.6"/></svg>
<div class="t" style="left:16.10px;top:486.95px;font-size:6.7px;color:#444;transform:scaleX(0.9320);">NO Nets Stats</div>
<svg style="left:1.5px;top:497.46000000000004px" width="9" height="8" viewBox="0 0 9 8"><rect x="2.8" y="0.4" width="5.8" height="4.6" fill="#b5d6d6" stroke="#3d7a8a" stroke-width="0.8"/><rect x="2.8" y="0.4" width="5.8" height="1.4" fill="#3d7a8a"/><rect x="0.4" y="3" width="5.8" height="4.6" fill="#a9c3e0" stroke="#4a6f96" stroke-width="0.8"/><rect x="0.4" y="3" width="5.8" height="1.4" fill="#4a8a9a"/><line x1="0.4" y1="5.9" x2="6.2" y2="5.9" stroke="#fff" stroke-width="0.6"/><line x1="3.3" y1="4.4" x2="3.3" y2="7.6" stroke="#fff" stroke-width="0.6"/></svg>
<div class="t" style="left:16.10px;top:500.19px;font-size:6.7px;color:#444;transform:scaleX(0.9320);">NovaNetsPlayers</div>
<div class="t" style="left:0.10px;top:512.74px;font-size:6.8px;color:#2b2b2b;font-weight:700;transform:scaleX(0.9200);">Forms</div>
<div style="left:0px;top:515.5px;width:1022px;height:11.5px;background:#f3f3f3;"></div>
<div style="left:0px;top:525.5px;width:1022px;height:1.5px;background:#c9c9c9;"></div>
<div class="t" style="left:0.00px;top:518.78px;font-size:6.4px;color:#444;transform:scaleX(0.8861);">Form View</div>
<div class="t" style="left:923.70px;top:519.11px;font-size:6.6px;color:#555;transform:scaleX(0.8482);">Num Lock</div>
<div style="left:959px;top:516.3px;width:20.5px;height:9.7px;background:#dadada;"></div>
<svg style="left:965px;top:517.8px" width="9" height="8" viewBox="0 0 9 8"><rect x="0.5" y="0.5" width="8" height="7" fill="#f6f6f6" stroke="#5a5a5a" stroke-width="1"/><rect x="3.3" y="2" width="1" height="1" fill="#666"/><rect x="4.8" y="2" width="1.5" height="1" fill="#888"/><rect x="2" y="4.8" width="1.2" height="1" fill="#666"/><rect x="4.8" y="4.8" width="1.5" height="1" fill="#666"/></svg>
<svg style="left:987px;top:517px" width="9" height="8" viewBox="0 0 9 8"><rect x="0.5" y="0.5" width="8" height="7" fill="#fff" stroke="#5a5a5a" stroke-width="1"/><rect x="0.5" y="0.5" width="8" height="1.8" fill="#5a5a5a"/><line x1="4.5" y1="0.5" x2="4.5" y2="7.5" stroke="#5a5a5a" stroke-width="0.9"/><line x1="0.5" y1="4.3" x2="8.5" y2="4.3" stroke="#5a5a5a" stroke-width="0.9"/><line x1="0.5" y1="6" x2="8.5" y2="6" stroke="#888" stroke-width="0.6"/></svg>
<svg style="left:1008px;top:517.5px" width="9" height="8" viewBox="0 0 9 8"><path d="M0.7 0.5 L0.7 7.5 M0.7 0.8 L6 7.2 M6 0.5 L6 7.5" fill="none" stroke="#555" stroke-width="1"/><rect x="7" y="0.5" width="1.5" height="7" fill="none" stroke="#666" stroke-width="0.7"/><circle cx="3" cy="5.5" r="0.7" fill="#777"/></svg>
<div style="left:238.5px;top:70px;width:0.8px;height:12px;background:#d4d4d4;"></div>
<div style="left:313px;top:70px;width:0.8px;height:12px;background:#d4d4d4;"></div>
<div style="left:313.4px;top:69px;width:74.6px;height:13.5px;background:#fff;"></div>
<div style="left:313.4px;top:69px;width:74.6px;height:1.6px;background:#b53a45;"></div>
<svg style="left:192.8px;top:71.3px" width="9" height="9" viewBox="0 0 9 9"><rect x="0.4" y="0.4" width="8.2" height="8.2" fill="#f4f7fb" stroke="#7d8fa6" stroke-width="0.7"/><rect x="0.4" y="0.4" width="8.2" height="1.4" fill="#c8505a"/><line x1="1.4" y1="3.6" x2="4.3" y2="3.6" stroke="#6d8fb8" stroke-width="0.7"/><line x1="1.4" y1="5.6" x2="4.3" y2="5.6" stroke="#6d8fb8" stroke-width="0.7"/><rect x="5" y="2.8" width="2.8" height="5" fill="#9fb4cf"/><line x1="5" y1="4.5" x2="7.8" y2="4.5" stroke="#fff" stroke-width="0.5"/><line x1="5" y1="6.2" x2="7.8" y2="6.2" stroke="#fff" stroke-width="0.5"/></svg>
<svg style="left:241.5px;top:71.3px" width="9" height="9" viewBox="0 0 9 9"><rect x="0.4" y="0.4" width="8.2" height="8.2" fill="#f4f7fb" stroke="#7d8fa6" stroke-width="0.7"/><rect x="0.4" y="0.4" width="8.2" height="1.4" fill="#c8505a"/><line x1="1.4" y1="3.6" x2="4.3" y2="3.6" stroke="#6d8fb8" stroke-width="0.7"/><line x1="1.4" y1="5.6" x2="4.3" y2="5.6" stroke="#6d8fb8" stroke-width="0.7"/><rect x="5" y="2.8" width="2.8" height="5" fill="#9fb4cf"/><line x1="5" y1="4.5" x2="7.8" y2="4.5" stroke="#fff" stroke-width="0.5"/><line x1="5" y1="6.2" x2="7.8" y2="6.2" stroke="#fff" stroke-width="0.5"/></svg>
<svg style="left:316px;top:71.3px" width="9" height="9" viewBox="0 0 9 9"><rect x="0.4" y="0.4" width="8.2" height="8.2" fill="#f4f7fb" stroke="#7d8fa6" stroke-width="0.7"/><rect x="0.4" y="0.4" width="8.2" height="1.4" fill="#c8505a"/><line x1="1.4" y1="3.6" x2="4.3" y2="3.6" stroke="#6d8fb8" stroke-width="0.7"/><line x1="1.4" y1="5.6" x2="4.3" y2="5.6" stroke="#6d8fb8" stroke-width="0.7"/><rect x="5" y="2.8" width="2.8" height="5" fill="#9fb4cf"/><line x1="5" y1="4.5" x2="7.8" y2="4.5" stroke="#fff" stroke-width="0.5"/><line x1="5" y1="6.2" x2="7.8" y2="6.2" stroke="#fff" stroke-width="0.5"/></svg>
<div class="t" style="left:205.50px;top:73.17px;font-size:6.3px;color:#555;transform:scaleX(0.9201);">Menu</div>
<div class="t" style="left:253.80px;top:73.17px;font-size:6.3px;color:#555;transform:scaleX(0.8862);">Meteor Rockets</div>
<div class="t" style="left:329.90px;top:73.17px;font-size:6.3px;color:#222;font-weight:700;transform:scaleX(0.8694);">Game Statistics</div>
<svg style="left:229.3px;top:73.3px" width="5.0" height="5.0" viewBox="0 0 5.0 5.0"><path d="M0.5 0.5 L4.5 4.5 M4.5 0.5 L0.5 4.5" stroke="#3a3a3a" stroke-width="0.9"/></svg>
<svg style="left:304.2px;top:73.3px" width="5.0" height="5.0" viewBox="0 0 5.0 5.0"><path d="M0.5 0.5 L4.5 4.5 M4.5 0.5 L0.5 4.5" stroke="#3a3a3a" stroke-width="0.9"/></svg>
<svg style="left:378.8px;top:73.3px" width="5.0" height="5.0" viewBox="0 0 5.0 5.0"><path d="M0.5 0.5 L4.5 4.5 M4.5 0.5 L0.5 4.5" stroke="#3a3a3a" stroke-width="0.9"/></svg>
<svg style="left:1015px;top:72.5px" width="5.5" height="5.5" viewBox="0 0 5.5 5.5"><path d="M0.5 0.5 L5.0 5.0 M5.0 0.5 L0.5 5.0" stroke="#444" stroke-width="0.9"/></svg>
<div style="left:190px;top:82px;width:824px;height:424px;background:#fff;"></div>
<div style="left:189px;top:82px;width:1px;height:424px;background:#a9a9a9;"></div>
<div style="left:190px;top:82px;width:824px;height:45px;background:#76bed5;"></div>
<div style="left:190px;top:126px;width:824px;height:1px;background:#6fb9d1;"></div>
<div style="left:190px;top:127px;width:824px;height:1px;background:#b5dce8;"></div>
<div class="t" style="left:246.70px;top:110.09px;font-size:11px;color:#686868;font-weight:700;transform:scaleX(1.1911);-webkit-text-stroke:0.35px #686868;">Game Stats</div>
<div style="left:199px;top:127px;width:1px;height:366.5px;background:#7a7a7a;"></div>
<svg style="left:194px;top:130px" width="4" height="6" viewBox="0 0 4 6"><path d="M0.3 0 L3.5 3 L0.3 6 Z" fill="#333"/></svg>
<div style="left:1014px;top:82px;width:8px;height:424px;background:#f4f4f4;"></div>
<svg style="left:1016px;top:84px" width="6" height="5" viewBox="0 0 6 5"><path d="M0.5 4.5 L3 1 L5.5 4.5 Z" fill="#606060"/></svg>
<div style="left:1017px;top:92px;width:4px;height:181px;background:#6e6e6e;border-radius:2px;"></div>
<svg style="left:1016px;top:499px" width="6" height="5" viewBox="0 0 6 5"><path d="M0.5 0.5 L3 4 L5.5 0.5 Z" fill="#606060"/></svg>
<div class="t" style="left:223.50px;top:137.90px;font-size:10.4px;color:#5f5f5f;transform:scaleX(0.8930);">Game 1 Results</div>
<div style="left:222.5px;top:155px;width:463.0px;height:42.8px;background:#e9ebee;box-sizing:border-box;border:1px solid #c6c9cd;"></div>
<div style="left:223px;top:155.5px;width:462px;height:10.5px;background:#dfe3e8;"></div>
<div style="left:233px;top:155.5px;width:54px;height:10.5px;background:linear-gradient(#fbd35c,#fde68e);"></div>
<div style="left:286.5px;top:156px;width:1px;height:10px;background:#cfd3d8;"></div>
<div style="left:341.5px;top:156px;width:1px;height:10px;background:#cfd3d8;"></div>
<div style="left:398.5px;top:156px;width:1px;height:10px;background:#cfd3d8;"></div>
<div style="left:467.0px;top:156px;width:1px;height:10px;background:#cfd3d8;"></div>
<div style="left:534.8px;top:156px;width:1px;height:10px;background:#cfd3d8;"></div>
<div style="left:611.5px;top:156px;width:1px;height:10px;background:#cfd3d8;"></div>
<div style="left:223px;top:166px;width:10px;height:21px;background:#dfe3e8;"></div>
<div style="left:223px;top:176px;width:10px;height:1px;background:#cfd3d8;"></div>
<div style="left:233px;top:166px;width:452px;height:10px;background:#a3cdf0;"></div>
<div style="left:233px;top:176px;width:452px;height:1px;background:#dde1e6;"></div>
<div style="left:233px;top:177px;width:452px;height:10px;background:#f2f2f2;"></div>
<div style="left:233px;top:187px;width:452px;height:1px;background:#dde1e6;"></div>
<div style="left:286.5px;top:177px;width:1px;height:10px;background:#e2e2e2;"></div>
<div style="left:341.5px;top:177px;width:1px;height:10px;background:#e2e2e2;"></div>
<div style="left:398.5px;top:177px;width:1px;height:10px;background:#e2e2e2;"></div>
<div style="left:467.0px;top:177px;width:1px;height:10px;background:#e2e2e2;"></div>
<div style="left:534.8px;top:177px;width:1px;height:10px;background:#e2e2e2;"></div>
<div style="left:611.5px;top:177px;width:1px;height:10px;background:#e2e2e2;"></div>
<div style="left:233px;top:166px;width:54px;height:10px;background:#fff;"></div>
<div style="left:277.5px;top:166.5px;width:8px;height:9px;background:#fff;box-sizing:border-box;border-left:1px solid #e6e6e6;"></div>
<div style="left:233px;top:175.2px;width:54px;height:1px;background:#eba3a8;"></div>
<div style="left:286px;top:166px;width:1px;height:10px;background:#eba3a8;"></div>
<svg style="left:279.5px;top:169.5px" width="5" height="3" viewBox="0 0 5 3"><polyline points="0.5,0.5 2.5,2.5 4.5,0.5" fill="none" stroke="#aaa" stroke-width="0.6"/></svg>
<div style="left:287.5px;top:177.2px;width:54px;height:9.6px;background:#9bbb59;"></div>
<div class="t" style="left:248.39px;top:157.48px;font-size:7.7px;color:#5a5220;transform:scaleX(0.9150);">Team</div>
<svg style="left:281px;top:160px" width="4" height="3" viewBox="0 0 4 3"><path d="M0.3 0.3 L3.3 0.3 L1.8 2.4 Z" fill="#333"/></svg>
<div class="t" style="left:289.30px;top:157.48px;font-size:7.7px;color:#3a3a3a;transform:scaleX(0.9150);">SumOfPoints</div>
<div style="left:333px;top:156px;width:8.5px;height:10px;background:#dfe3e8;"></div>
<svg style="left:336px;top:160px" width="4" height="3" viewBox="0 0 4 3"><path d="M0.3 0.3 L3.3 0.3 L1.8 2.4 Z" fill="#333"/></svg>
<div class="t" style="left:344.30px;top:157.48px;font-size:7.7px;color:#3a3a3a;transform:scaleX(0.9150);">SumOfAssists</div>
<div style="left:390px;top:156px;width:8.5px;height:10px;background:#dfe3e8;"></div>
<svg style="left:393px;top:160px" width="4" height="3" viewBox="0 0 4 3"><path d="M0.3 0.3 L3.3 0.3 L1.8 2.4 Z" fill="#333"/></svg>
<div class="t" style="left:401.30px;top:157.48px;font-size:7.7px;color:#3a3a3a;transform:scaleX(0.9150);">SumOfRebounds</div>
<div style="left:458.5px;top:156px;width:8.5px;height:10px;background:#dfe3e8;"></div>
<svg style="left:461.5px;top:160px" width="4" height="3" viewBox="0 0 4 3"><path d="M0.3 0.3 L3.3 0.3 L1.8 2.4 Z" fill="#333"/></svg>
<div class="t" style="left:469.80px;top:157.48px;font-size:7.7px;color:#3a3a3a;transform:scaleX(0.9150);">SumOfTurnovers</div>
<div style="left:526.3px;top:156px;width:8.5px;height:10px;background:#dfe3e8;"></div>
<svg style="left:529.3px;top:160px" width="4" height="3" viewBox="0 0 4 3"><path d="M0.3 0.3 L3.3 0.3 L1.8 2.4 Z" fill="#333"/></svg>
<div class="t" style="left:537.60px;top:157.48px;font-size:7.7px;color:#3a3a3a;transform:scaleX(0.9150);">AvgOfFree Throw %</div>
<div style="left:603px;top:156px;width:8.5px;height:10px;background:#dfe3e8;"></div>
<svg style="left:606px;top:160px" width="4" height="3" viewBox="0 0 4 3"><path d="M0.3 0.3 L3.3 0.3 L1.8 2.4 Z" fill="#333"/></svg>
<div class="t" style="left:614.30px;top:157.48px;font-size:7.7px;color:#3a3a3a;transform:scaleX(0.9150);">AvgOfThree Point %</div>
<div class="t" style="left:234.30px;top:168.24px;font-size:7.4px;color:#000;transform:scaleX(0.9900);">Astro Hawks</div>
<div class="t" style="left:288.50px;top:169.46px;font-size:6.9px;color:#000;transform:scaleX(1.0000);">133</div>
<div class="t" style="left:343.50px;top:169.46px;font-size:6.9px;color:#000;transform:scaleX(1.0000);">5</div>
<div class="t" style="left:400.50px;top:169.46px;font-size:6.9px;color:#000;transform:scaleX(1.0000);">20</div>
<div class="t" style="left:469.00px;top:169.46px;font-size:6.9px;color:#000;transform:scaleX(1.0000);">12</div>
<div class="t" style="left:536.80px;top:169.46px;font-size:6.9px;color:#000;transform:scaleX(1.0000);">62.36%</div>
<div class="t" style="left:613.50px;top:169.46px;font-size:6.9px;color:#000;transform:scaleX(1.0000);">30.80%</div>
<div class="t" style="left:234.30px;top:179.24px;font-size:7.4px;color:#333;transform:scaleX(0.9900);">Nova Nets</div>
<div class="t" style="left:288.50px;top:180.46px;font-size:6.9px;color:#333;transform:scaleX(1.0000);">148</div>
<div class="t" style="left:343.50px;top:180.46px;font-size:6.9px;color:#333;transform:scaleX(1.0000);">10</div>
<div class="t" style="left:400.50px;top:180.46px;font-size:6.9px;color:#333;transform:scaleX(1.0000);">11</div>
<div class="t" style="left:469.00px;top:180.46px;font-size:6.9px;color:#333;transform:scaleX(1.0000);">8</div>
<div class="t" style="left:536.80px;top:180.46px;font-size:6.9px;color:#333;transform:scaleX(1.0000);">61.30%</div>
<div class="t" style="left:613.50px;top:180.46px;font-size:6.9px;color:#333;transform:scaleX(1.0000);">31.63%</div>
<div style="left:223px;top:188px;width:462px;height:10px;background:linear-gradient(#f3f4f6 0,#f3f4f6 50%,#e6e8eb 50%,#e6e8eb 100%);box-sizing:border-box;border-top:1px solid #dcdde0;"></div>
<div class="t" style="left:225.50px;top:190.20px;font-size:6.5px;color:#5f6e80;transform:scaleX(0.8040);">Record:</div>
<svg style="left:247px;top:191px" width="5" height="5" viewBox="0 0 5 5"><rect x="0" y="0" width="0.8" height="4.1" fill="#8a8a8a"/><path d="M3.9 0 L1.3 2.05 L3.9 4.1 Z" fill="#3a3a3a"/></svg>
<svg style="left:256px;top:191px" width="3" height="4" viewBox="0 0 3 4"><path d="M2.5 0 L0 2 L2.5 4 Z" fill="#bbb"/></svg>
<div style="left:262.7px;top:188.4px;width:25.8px;height:9.2px;background:#fff;box-sizing:border-box;border:1px solid #e2e2e2;"></div>
<div class="t" style="left:263.50px;top:190.97px;font-size:6.3px;color:#222;transform:scaleX(0.9198);">1 of 2</div>
<svg style="left:293px;top:191px" width="3" height="4" viewBox="0 0 3 4"><path d="M0 0 L2.5 2 L0 4 Z" fill="#333"/></svg>
<svg style="left:302px;top:191px" width="5" height="5" viewBox="0 0 5 5"><path d="M0.2 0.3 L2.8 2.1 L0.2 3.9 Z" fill="#333"/><rect x="3.3" y="0.2" width="0.8" height="3.8" fill="#444"/></svg>
<svg style="left:309.5px;top:190.5px" width="6" height="5" viewBox="0 0 6 5"><path d="M0.2 0.8 L2.5 2.5 L0.2 4.2 Z" fill="#ccc"/><rect x="3.2" y="1" width="2.5" height="3" fill="#f1d9b5"/></svg>
<div style="left:318px;top:189px;width:1px;height:8px;background:#dcdcdc;"></div>
<svg style="left:323.5px;top:189px" width="9" height="9" viewBox="0 0 9 9"><path d="M0.5 0.5 L8.3 0.5 L5.2 4.3 L5.2 8.5 L3.6 7.6 L3.6 4.3 Z" fill="none" stroke="#a8a8a8" stroke-width="0.8"/><path d="M5.5 6 L8 8.5 M8 6 L5.5 8.5" stroke="#a8a8a8" stroke-width="0.7"/></svg>
<div class="t" style="left:333.60px;top:190.72px;font-size:6px;color:#c5c5c5;transform:scaleX(0.9394);">No Filter</div>
<div style="left:360px;top:189px;width:1px;height:8px;background:#dcdcdc;"></div>
<div style="left:363px;top:188.4px;width:38px;height:9.2px;background:#fff;box-sizing:border-box;border:1px solid #d6d6d6;"></div>
<div class="t" style="left:364.20px;top:190.97px;font-size:6.3px;color:#333;transform:scaleX(0.8265);">Search</div>
<div style="left:418px;top:189px;width:1px;height:8px;background:#e0e0e0;"></div>
<div style="left:418.5px;top:188.6px;width:266.0px;height:8.6px;background:#f9f9f9;box-sizing:border-box;border-left:1px solid #dfe0e3;"></div>
<svg style="left:421px;top:190.5px" width="4" height="5" viewBox="0 0 4 5"><path d="M3.5 0 L0 2.5 L3.5 5 Z" fill="#555"/></svg>
<div style="left:427.5px;top:190.4px;width:124px;height:4.3px;background:#6e6e6e;border-radius:2.2px;"></div>
<svg style="left:678.5px;top:189.8px" width="4" height="5" viewBox="0 0 4 5"><path d="M0 0 L3.5 2.5 L0 5 Z" fill="#555"/></svg>
<div class="t" style="left:223.50px;top:208.90px;font-size:10.4px;color:#5f5f5f;transform:scaleX(0.8930);">Game 2 Results</div>
<div style="left:222.5px;top:226px;width:463.0px;height:42.8px;background:#e9ebee;box-sizing:border-box;border:1px solid #c6c9cd;"></div>
<div style="left:223px;top:226.5px;width:462px;height:10.5px;background:#dfe3e8;"></div>
<div style="left:293.5px;top:227px;width:1px;height:10px;background:#cfd3d8;"></div>
<div style="left:348.5px;top:227px;width:1px;height:10px;background:#cfd3d8;"></div>
<div style="left:405.0px;top:227px;width:1px;height:10px;background:#cfd3d8;"></div>
<div style="left:473.0px;top:227px;width:1px;height:10px;background:#cfd3d8;"></div>
<div style="left:528.9px;top:227px;width:1px;height:10px;background:#cfd3d8;"></div>
<div style="left:605.9px;top:227px;width:1px;height:10px;background:#cfd3d8;"></div>
<div style="left:223px;top:237px;width:10px;height:21px;background:#dfe3e8;"></div>
<div style="left:223px;top:247px;width:10px;height:1px;background:#cfd3d8;"></div>
<div style="left:233px;top:237px;width:452px;height:10px;background:#a3cdf0;"></div>
<div style="left:233px;top:247px;width:452px;height:1px;background:#dde1e6;"></div>
<div style="left:233px;top:248px;width:452px;height:10px;background:#f2f2f2;"></div>
<div style="left:233px;top:258px;width:452px;height:1px;background:#dde1e6;"></div>
<div style="left:293.5px;top:248px;width:1px;height:10px;background:#e2e2e2;"></div>
<div style="left:348.5px;top:248px;width:1px;height:10px;background:#e2e2e2;"></div>
<div style="left:405.0px;top:248px;width:1px;height:10px;background:#e2e2e2;"></div>
<div style="left:473.0px;top:248px;width:1px;height:10px;background:#e2e2e2;"></div>
<div style="left:528.9px;top:248px;width:1px;height:10px;background:#e2e2e2;"></div>
<div style="left:605.9px;top:248px;width:1px;height:10px;background:#e2e2e2;"></div>
<div style="left:233px;top:237px;width:61px;height:10px;background:#fff;"></div>
<div style="left:284.5px;top:237.5px;width:8px;height:9px;background:#fff;box-sizing:border-box;border-left:1px solid #e6e6e6;"></div>
<svg style="left:286.5px;top:240.5px" width="5" height="3" viewBox="0 0 5 3"><polyline points="0.5,0.5 2.5,2.5 4.5,0.5" fill="none" stroke="#aaa" stroke-width="0.6"/></svg>
<div style="left:294.5px;top:237.2px;width:54px;height:9.6px;background:#9bbb59;"></div>
<div class="t" style="left:251.89px;top:228.48px;font-size:7.7px;color:#3a3a3a;transform:scaleX(0.9150);">Team</div>
<svg style="left:288px;top:231px" width="4" height="3" viewBox="0 0 4 3"><path d="M0.3 0.3 L3.3 0.3 L1.8 2.4 Z" fill="#333"/></svg>
<div class="t" style="left:296.30px;top:228.48px;font-size:7.7px;color:#3a3a3a;transform:scaleX(0.9150);">SumOfPoints</div>
<div style="left:340px;top:227px;width:8.5px;height:10px;background:#dfe3e8;"></div>
<svg style="left:343px;top:231px" width="4" height="3" viewBox="0 0 4 3"><path d="M0.3 0.3 L3.3 0.3 L1.8 2.4 Z" fill="#333"/></svg>
<div class="t" style="left:351.30px;top:228.48px;font-size:7.7px;color:#3a3a3a;transform:scaleX(0.9150);">SumOfAssists</div>
<div style="left:396.5px;top:227px;width:8.5px;height:10px;background:#dfe3e8;"></div>
<svg style="left:399.5px;top:231px" width="4" height="3" viewBox="0 0 4 3"><path d="M0.3 0.3 L3.3 0.3 L1.8 2.4 Z" fill="#333"/></svg>
<div class="t" style="left:407.80px;top:228.48px;font-size:7.7px;color:#3a3a3a;transform:scaleX(0.9150);">SumOfRebounds</div>
<div style="left:464.5px;top:227px;width:8.5px;height:10px;background:#dfe3e8;"></div>
<svg style="left:467.5px;top:231px" width="4" height="3" viewBox="0 0 4 3"><path d="M0.3 0.3 L3.3 0.3 L1.8 2.4 Z" fill="#333"/></svg>
<div class="t" style="left:475.80px;top:228.48px;font-size:7.7px;color:#3a3a3a;transform:scaleX(0.9150);">SumOfTurnov</div>
<div style="left:520.4px;top:227px;width:8.5px;height:10px;background:#dfe3e8;"></div>
<svg style="left:523.4px;top:231px" width="4" height="3" viewBox="0 0 4 3"><path d="M0.3 0.3 L3.3 0.3 L1.8 2.4 Z" fill="#333"/></svg>
<div class="t" style="left:531.70px;top:228.48px;font-size:7.7px;color:#3a3a3a;transform:scaleX(0.9150);">AvgOfFree Throw %</div>
<div style="left:597.4px;top:227px;width:8.5px;height:10px;background:#dfe3e8;"></div>
<svg style="left:600.4px;top:231px" width="4" height="3" viewBox="0 0 4 3"><path d="M0.3 0.3 L3.3 0.3 L1.8 2.4 Z" fill="#333"/></svg>
<div class="t" style="left:608.70px;top:228.48px;font-size:7.7px;color:#3a3a3a;transform:scaleX(0.9150);">AvgOfThree Point %</div>
<div style="left:676px;top:227px;width:8.5px;height:10px;background:#dfe3e8;"></div>
<svg style="left:679px;top:231px" width="4" height="3" viewBox="0 0 4 3"><path d="M0.3 0.3 L3.3 0.3 L1.8 2.4 Z" fill="#333"/></svg>
<div class="t" style="left:234.30px;top:239.24px;font-size:7.4px;color:#000;transform:scaleX(0.9900);">Celestial Spurs</div>
<div class="t" style="left:295.50px;top:240.46px;font-size:6.9px;color:#000;transform:scaleX(1.0000);">101</div>
<div class="t" style="left:350.50px;top:240.46px;font-size:6.9px;color:#000;transform:scaleX(1.0000);">15</div>
<div class="t" style="left:407.00px;top:240.46px;font-size:6.9px;color:#000;transform:scaleX(1.0000);">16</div>
<div class="t" style="left:475.00px;top:240.46px;font-size:6.9px;color:#000;transform:scaleX(1.0000);">13</div>
<div class="t" style="left:530.90px;top:240.46px;font-size:6.9px;color:#000;transform:scaleX(1.0000);">70.50%</div>
<div class="t" style="left:607.90px;top:240.46px;font-size:6.9px;color:#000;transform:scaleX(1.0000);">33.97%</div>
<div class="t" style="left:234.30px;top:250.24px;font-size:7.4px;color:#333;transform:scaleX(0.9900);">Nova Nets</div>
<div class="t" style="left:295.50px;top:251.46px;font-size:6.9px;color:#333;transform:scaleX(1.0000);">81</div>
<div class="t" style="left:350.50px;top:251.46px;font-size:6.9px;color:#333;transform:scaleX(1.0000);">6</div>
<div class="t" style="left:407.00px;top:251.46px;font-size:6.9px;color:#333;transform:scaleX(1.0000);">16</div>
<div class="t" style="left:475.00px;top:251.46px;font-size:6.9px;color:#333;transform:scaleX(1.0000);">15</div>
<div class="t" style="left:530.90px;top:251.46px;font-size:6.9px;color:#333;transform:scaleX(1.0000);">58.77%</div>
<div class="t" style="left:607.90px;top:251.46px;font-size:6.9px;color:#333;transform:scaleX(1.0000);">36.61%</div>
<div style="left:223px;top:259px;width:462px;height:10px;background:linear-gradient(#f3f4f6 0,#f3f4f6 50%,#e6e8eb 50%,#e6e8eb 100%);box-sizing:border-box;border-top:1px solid #dcdde0;"></div>
<div class="t" style="left:225.50px;top:261.20px;font-size:6.5px;color:#5f6e80;transform:scaleX(0.8040);">Record:</div>
<svg style="left:247px;top:262px" width="5" height="5" viewBox="0 0 5 5"><rect x="0" y="0" width="0.8" height="4.1" fill="#8a8a8a"/><path d="M3.9 0 L1.3 2.05 L3.9 4.1 Z" fill="#3a3a3a"/></svg>
<svg style="left:256px;top:262px" width="3" height="4" viewBox="0 0 3 4"><path d="M2.5 0 L0 2 L2.5 4 Z" fill="#bbb"/></svg>
<div style="left:262.7px;top:259.4px;width:25.8px;height:9.2px;background:#fff;box-sizing:border-box;border:1px solid #e2e2e2;"></div>
<div class="t" style="left:263.50px;top:261.97px;font-size:6.3px;color:#222;transform:scaleX(0.9198);">1 of 2</div>
<svg style="left:293px;top:262px" width="3" height="4" viewBox="0 0 3 4"><path d="M0 0 L2.5 2 L0 4 Z" fill="#333"/></svg>
<svg style="left:302px;top:262px" width="5" height="5" viewBox="0 0 5 5"><path d="M0.2 0.3 L2.8 2.1 L0.2 3.9 Z" fill="#333"/><rect x="3.3" y="0.2" width="0.8" height="3.8" fill="#444"/></svg>
<svg style="left:309.5px;top:261.5px" width="6" height="5" viewBox="0 0 6 5"><path d="M0.2 0.8 L2.5 2.5 L0.2 4.2 Z" fill="#ccc"/><rect x="3.2" y="1" width="2.5" height="3" fill="#f1d9b5"/></svg>
<div style="left:318px;top:260px;width:1px;height:8px;background:#dcdcdc;"></div>
<svg style="left:323.5px;top:260px" width="9" height="9" viewBox="0 0 9 9"><path d="M0.5 0.5 L8.3 0.5 L5.2 4.3 L5.2 8.5 L3.6 7.6 L3.6 4.3 Z" fill="none" stroke="#a8a8a8" stroke-width="0.8"/><path d="M5.5 6 L8 8.5 M8 6 L5.5 8.5" stroke="#a8a8a8" stroke-width="0.7"/></svg>
<div class="t" style="left:333.60px;top:261.72px;font-size:6px;color:#c5c5c5;transform:scaleX(0.9394);">No Filter</div>
<div style="left:360px;top:260px;width:1px;height:8px;background:#dcdcdc;"></div>
<div style="left:363px;top:259.4px;width:38px;height:9.2px;background:#fff;box-sizing:border-box;border:1px solid #d6d6d6;"></div>
<div class="t" style="left:364.20px;top:261.97px;font-size:6.3px;color:#333;transform:scaleX(0.8265);">Search</div>
<div style="left:418px;top:260px;width:1px;height:8px;background:#e0e0e0;"></div>
<div class="t" style="left:223.50px;top:280.90px;font-size:10.4px;color:#5f5f5f;transform:scaleX(0.8930);">Game 3 Results</div>
<div style="left:222.5px;top:298px;width:463.0px;height:42.8px;background:#e9ebee;box-sizing:border-box;border:1px solid #c6c9cd;"></div>
<div style="left:223px;top:298.5px;width:462px;height:10.5px;background:#dfe3e8;"></div>
<div style="left:293.5px;top:299px;width:1px;height:10px;background:#cfd3d8;"></div>
<div style="left:348.5px;top:299px;width:1px;height:10px;background:#cfd3d8;"></div>
<div style="left:405.0px;top:299px;width:1px;height:10px;background:#cfd3d8;"></div>
<div style="left:473.0px;top:299px;width:1px;height:10px;background:#cfd3d8;"></div>
<div style="left:529.5px;top:299px;width:1px;height:10px;background:#cfd3d8;"></div>
<div style="left:607.1px;top:299px;width:1px;height:10px;background:#cfd3d8;"></div>
<div style="left:223px;top:309px;width:10px;height:21px;background:#dfe3e8;"></div>
<div style="left:223px;top:319px;width:10px;height:1px;background:#cfd3d8;"></div>
<div style="left:233px;top:309px;width:452px;height:10px;background:#a3cdf0;"></div>
<div style="left:233px;top:319px;width:452px;height:1px;background:#dde1e6;"></div>
<div style="left:233px;top:320px;width:452px;height:10px;background:#f2f2f2;"></div>
<div style="left:233px;top:330px;width:452px;height:1px;background:#dde1e6;"></div>
<div style="left:293.5px;top:320px;width:1px;height:10px;background:#e2e2e2;"></div>
<div style="left:348.5px;top:320px;width:1px;height:10px;background:#e2e2e2;"></div>
<div style="left:405.0px;top:320px;width:1px;height:10px;background:#e2e2e2;"></div>
<div style="left:473.0px;top:320px;width:1px;height:10px;background:#e2e2e2;"></div>
<div style="left:529.5px;top:320px;width:1px;height:10px;background:#e2e2e2;"></div>
<div style="left:607.1px;top:320px;width:1px;height:10px;background:#e2e2e2;"></div>
<div style="left:233px;top:309px;width:61px;height:10px;background:#fff;"></div>
<div style="left:284.5px;top:309.5px;width:8px;height:9px;background:#fff;box-sizing:border-box;border-left:1px solid #e6e6e6;"></div>
<svg style="left:286.5px;top:312.5px" width="5" height="3" viewBox="0 0 5 3"><polyline points="0.5,0.5 2.5,2.5 4.5,0.5" fill="none" stroke="#aaa" stroke-width="0.6"/></svg>
<div style="left:294.5px;top:309.2px;width:54px;height:9.6px;background:#9bbb59;"></div>
<div class="t" style="left:251.89px;top:300.48px;font-size:7.7px;color:#3a3a3a;transform:scaleX(0.9150);">Team</div>
<svg style="left:288px;top:303px" width="4" height="3" viewBox="0 0 4 3"><path d="M0.3 0.3 L3.3 0.3 L1.8 2.4 Z" fill="#333"/></svg>
<div class="t" style="left:296.30px;top:300.48px;font-size:7.7px;color:#3a3a3a;transform:scaleX(0.9150);">SumOfPoints</div>
<div style="left:340px;top:299px;width:8.5px;height:10px;background:#dfe3e8;"></div>
<svg style="left:343px;top:303px" width="4" height="3" viewBox="0 0 4 3"><path d="M0.3 0.3 L3.3 0.3 L1.8 2.4 Z" fill="#333"/></svg>
<div class="t" style="left:351.30px;top:300.48px;font-size:7.7px;color:#3a3a3a;transform:scaleX(0.9150);">SumOfAssists</div>
<div style="left:396.5px;top:299px;width:8.5px;height:10px;background:#dfe3e8;"></div>
<svg style="left:399.5px;top:303px" width="4" height="3" viewBox="0 0 4 3"><path d="M0.3 0.3 L3.3 0.3 L1.8 2.4 Z" fill="#333"/></svg>
<div class="t" style="left:407.80px;top:300.48px;font-size:7.7px;color:#3a3a3a;transform:scaleX(0.9150);">SumOfRebounds</div>
<div style="left:464.5px;top:299px;width:8.5px;height:10px;background:#dfe3e8;"></div>
<svg style="left:467.5px;top:303px" width="4" height="3" viewBox="0 0 4 3"><path d="M0.3 0.3 L3.3 0.3 L1.8 2.4 Z" fill="#333"/></svg>
<div class="t" style="left:475.80px;top:300.48px;font-size:7.7px;color:#3a3a3a;transform:scaleX(0.9150);">SumOfTurnov</div>
<div style="left:521px;top:299px;width:8.5px;height:10px;background:#dfe3e8;"></div>
<svg style="left:524px;top:303px" width="4" height="3" viewBox="0 0 4 3"><path d="M0.3 0.3 L3.3 0.3 L1.8 2.4 Z" fill="#333"/></svg>
<div class="t" style="left:532.30px;top:300.48px;font-size:7.7px;color:#3a3a3a;transform:scaleX(0.9150);">AvgOfFree Throw %</div>
<div style="left:598.6px;top:299px;width:8.5px;height:10px;background:#dfe3e8;"></div>
<svg style="left:601.6px;top:303px" width="4" height="3" viewBox="0 0 4 3"><path d="M0.3 0.3 L3.3 0.3 L1.8 2.4 Z" fill="#333"/></svg>
<div class="t" style="left:609.90px;top:300.48px;font-size:7.7px;color:#3a3a3a;transform:scaleX(0.9150);">AvgOfThree Point %</div>
<div style="left:676px;top:299px;width:8.5px;height:10px;background:#dfe3e8;"></div>
<svg style="left:679px;top:303px" width="4" height="3" viewBox="0 0 4 3"><path d="M0.3 0.3 L3.3 0.3 L1.8 2.4 Z" fill="#333"/></svg>
<div class="t" style="left:234.30px;top:311.24px;font-size:7.4px;color:#000;transform:scaleX(0.9900);">Celestial Spurs</div>
<div class="t" style="left:336.49px;top:312.46px;font-size:6.9px;color:#000;transform:scaleX(1.0000);">137</div>
<div class="t" style="left:400.66px;top:312.46px;font-size:6.9px;color:#000;transform:scaleX(1.0000);">8</div>
<div class="t" style="left:464.82px;top:312.46px;font-size:6.9px;color:#000;transform:scaleX(1.0000);">13</div>
<div class="t" style="left:521.32px;top:312.46px;font-size:6.9px;color:#000;transform:scaleX(1.0000);">12</div>
<div class="t" style="left:583.19px;top:312.46px;font-size:6.9px;color:#000;transform:scaleX(1.0000);">55.53%</div>
<div class="t" style="left:660.59px;top:312.46px;font-size:6.9px;color:#000;transform:scaleX(1.0000);">36.38%</div>
<div class="t" style="left:234.30px;top:322.24px;font-size:7.4px;color:#333;transform:scaleX(0.9900);">Cosmo Kings</div>
<div class="t" style="left:336.49px;top:323.46px;font-size:6.9px;color:#333;transform:scaleX(1.0000);">101</div>
<div class="t" style="left:396.82px;top:323.46px;font-size:6.9px;color:#333;transform:scaleX(1.0000);">16</div>
<div class="t" style="left:464.82px;top:323.46px;font-size:6.9px;color:#333;transform:scaleX(1.0000);">18</div>
<div class="t" style="left:521.32px;top:323.46px;font-size:6.9px;color:#333;transform:scaleX(1.0000);">17</div>
<div class="t" style="left:583.19px;top:323.46px;font-size:6.9px;color:#333;transform:scaleX(1.0000);">58.38%</div>
<div class="t" style="left:660.59px;top:323.46px;font-size:6.9px;color:#333;transform:scaleX(1.0000);">35.54%</div>
<div style="left:223px;top:331px;width:462px;height:10px;background:linear-gradient(#f3f4f6 0,#f3f4f6 50%,#e6e8eb 50%,#e6e8eb 100%);box-sizing:border-box;border-top:1px solid #dcdde0;"></div>
<div class="t" style="left:225.50px;top:333.20px;font-size:6.5px;color:#5f6e80;transform:scaleX(0.8040);">Record:</div>
<svg style="left:247px;top:334px" width="5" height="5" viewBox="0 0 5 5"><rect x="0" y="0" width="0.8" height="4.1" fill="#8a8a8a"/><path d="M3.9 0 L1.3 2.05 L3.9 4.1 Z" fill="#3a3a3a"/></svg>
<svg style="left:256px;top:334px" width="3" height="4" viewBox="0 0 3 4"><path d="M2.5 0 L0 2 L2.5 4 Z" fill="#bbb"/></svg>
<div style="left:262.7px;top:331.4px;width:25.8px;height:9.2px;background:#fff;box-sizing:border-box;border:1px solid #e2e2e2;"></div>
<div class="t" style="left:263.50px;top:333.97px;font-size:6.3px;color:#222;transform:scaleX(0.9198);">1 of 2</div>
<svg style="left:293px;top:334px" width="3" height="4" viewBox="0 0 3 4"><path d="M0 0 L2.5 2 L0 4 Z" fill="#333"/></svg>
<svg style="left:302px;top:334px" width="5" height="5" viewBox="0 0 5 5"><path d="M0.2 0.3 L2.8 2.1 L0.2 3.9 Z" fill="#333"/><rect x="3.3" y="0.2" width="0.8" height="3.8" fill="#444"/></svg>
<svg style="left:309.5px;top:333.5px" width="6" height="5" viewBox="0 0 6 5"><path d="M0.2 0.8 L2.5 2.5 L0.2 4.2 Z" fill="#ccc"/><rect x="3.2" y="1" width="2.5" height="3" fill="#f1d9b5"/></svg>
<div style="left:318px;top:332px;width:1px;height:8px;background:#dcdcdc;"></div>
<svg style="left:323.5px;top:332px" width="9" height="9" viewBox="0 0 9 9"><path d="M0.5 0.5 L8.3 0.5 L5.2 4.3 L5.2 8.5 L3.6 7.6 L3.6 4.3 Z" fill="none" stroke="#a8a8a8" stroke-width="0.8"/><path d="M5.5 6 L8 8.5 M8 6 L5.5 8.5" stroke="#a8a8a8" stroke-width="0.7"/></svg>
<div class="t" style="left:333.60px;top:333.72px;font-size:6px;color:#c5c5c5;transform:scaleX(0.9394);">No Filter</div>
<div style="left:360px;top:332px;width:1px;height:8px;background:#dcdcdc;"></div>
<div style="left:363px;top:331.4px;width:38px;height:9.2px;background:#fff;box-sizing:border-box;border:1px solid #d6d6d6;"></div>
<div class="t" style="left:364.20px;top:333.97px;font-size:6.3px;color:#333;transform:scaleX(0.8265);">Search</div>
<div style="left:418px;top:332px;width:1px;height:8px;background:#e0e0e0;"></div>
<div style="left:418.5px;top:331.6px;width:266.0px;height:8.6px;background:#f9f9f9;box-sizing:border-box;border-left:1px solid #dfe0e3;"></div>
<svg style="left:421px;top:333.5px" width="4" height="5" viewBox="0 0 4 5"><path d="M3.5 0 L0 2.5 L3.5 5 Z" fill="#555"/></svg>
<div style="left:427.5px;top:333.4px;width:124px;height:4.3px;background:#6e6e6e;border-radius:2.2px;"></div>
<svg style="left:678.5px;top:332.8px" width="4" height="5" viewBox="0 0 4 5"><path d="M0 0 L3.5 2.5 L0 5 Z" fill="#555"/></svg>
<div class="t" style="left:223.50px;top:351.90px;font-size:10.4px;color:#5f5f5f;transform:scaleX(0.8930);">Game 4 Results</div>
<div style="left:222.5px;top:369px;width:463.0px;height:42.8px;background:#e9ebee;box-sizing:border-box;border:1px solid #c6c9cd;"></div>
<div style="left:223px;top:369.5px;width:460px;height:10.5px;background:#dfe3e8;"></div>
<div style="left:296.9px;top:370px;width:1px;height:10px;background:#cfd3d8;"></div>
<div style="left:352.5px;top:370px;width:1px;height:10px;background:#cfd3d8;"></div>
<div style="left:409.1px;top:370px;width:1px;height:10px;background:#cfd3d8;"></div>
<div style="left:477.1px;top:370px;width:1px;height:10px;background:#cfd3d8;"></div>
<div style="left:527.8px;top:370px;width:1px;height:10px;background:#cfd3d8;"></div>
<div style="left:605.1px;top:370px;width:1px;height:10px;background:#cfd3d8;"></div>
<div style="left:223px;top:380px;width:10px;height:21px;background:#dfe3e8;"></div>
<div style="left:223px;top:390px;width:10px;height:1px;background:#cfd3d8;"></div>
<div style="left:233px;top:380px;width:450px;height:10px;background:#a3cdf0;"></div>
<div style="left:233px;top:390px;width:450px;height:1px;background:#dde1e6;"></div>
<div style="left:233px;top:391px;width:450px;height:10px;background:#f2f2f2;"></div>
<div style="left:233px;top:401px;width:450px;height:1px;background:#dde1e6;"></div>
<div style="left:296.9px;top:391px;width:1px;height:10px;background:#e2e2e2;"></div>
<div style="left:352.5px;top:391px;width:1px;height:10px;background:#e2e2e2;"></div>
<div style="left:409.1px;top:391px;width:1px;height:10px;background:#e2e2e2;"></div>
<div style="left:477.1px;top:391px;width:1px;height:10px;background:#e2e2e2;"></div>
<div style="left:527.8px;top:391px;width:1px;height:10px;background:#e2e2e2;"></div>
<div style="left:605.1px;top:391px;width:1px;height:10px;background:#e2e2e2;"></div>
<div style="left:233px;top:380px;width:64.39999999999998px;height:10px;background:#fff;"></div>
<div style="left:287.9px;top:380.5px;width:8px;height:9px;background:#fff;box-sizing:border-box;border-left:1px solid #e6e6e6;"></div>
<svg style="left:289.9px;top:383.5px" width="5" height="3" viewBox="0 0 5 3"><polyline points="0.5,0.5 2.5,2.5 4.5,0.5" fill="none" stroke="#aaa" stroke-width="0.6"/></svg>
<div style="left:297.9px;top:391.2px;width:54.60000000000002px;height:9.6px;background:#9bbb59;"></div>
<div class="t" style="left:253.59px;top:371.48px;font-size:7.7px;color:#3a3a3a;transform:scaleX(0.9150);">Team</div>
<svg style="left:291.4px;top:374px" width="4" height="3" viewBox="0 0 4 3"><path d="M0.3 0.3 L3.3 0.3 L1.8 2.4 Z" fill="#333"/></svg>
<div class="t" style="left:299.70px;top:371.48px;font-size:7.7px;color:#3a3a3a;transform:scaleX(0.9150);">SumOfPoints</div>
<div style="left:344px;top:370px;width:8.5px;height:10px;background:#dfe3e8;"></div>
<svg style="left:347px;top:374px" width="4" height="3" viewBox="0 0 4 3"><path d="M0.3 0.3 L3.3 0.3 L1.8 2.4 Z" fill="#333"/></svg>
<div class="t" style="left:355.30px;top:371.48px;font-size:7.7px;color:#3a3a3a;transform:scaleX(0.9150);">SumOfAssists</div>
<div style="left:400.6px;top:370px;width:8.5px;height:10px;background:#dfe3e8;"></div>
<svg style="left:403.6px;top:374px" width="4" height="3" viewBox="0 0 4 3"><path d="M0.3 0.3 L3.3 0.3 L1.8 2.4 Z" fill="#333"/></svg>
<div class="t" style="left:411.90px;top:371.48px;font-size:7.7px;color:#3a3a3a;transform:scaleX(0.9150);">SumOfRebounds</div>
<div style="left:468.6px;top:370px;width:8.5px;height:10px;background:#dfe3e8;"></div>
<svg style="left:471.6px;top:374px" width="4" height="3" viewBox="0 0 4 3"><path d="M0.3 0.3 L3.3 0.3 L1.8 2.4 Z" fill="#333"/></svg>
<div class="t" style="left:479.90px;top:371.48px;font-size:7.7px;color:#3a3a3a;transform:scaleX(0.9150);">SumOfTurnc</div>
<div style="left:519.3px;top:370px;width:8.5px;height:10px;background:#dfe3e8;"></div>
<svg style="left:522.3px;top:374px" width="4" height="3" viewBox="0 0 4 3"><path d="M0.3 0.3 L3.3 0.3 L1.8 2.4 Z" fill="#333"/></svg>
<div class="t" style="left:530.60px;top:371.48px;font-size:7.7px;color:#3a3a3a;transform:scaleX(0.9150);">AvgOfFree Throw %</div>
<div style="left:596.6px;top:370px;width:8.5px;height:10px;background:#dfe3e8;"></div>
<svg style="left:599.6px;top:374px" width="4" height="3" viewBox="0 0 4 3"><path d="M0.3 0.3 L3.3 0.3 L1.8 2.4 Z" fill="#333"/></svg>
<div class="t" style="left:607.90px;top:371.48px;font-size:7.7px;color:#3a3a3a;transform:scaleX(0.9150);">AvgOfThree Point %</div>
<div style="left:674px;top:370px;width:8.5px;height:10px;background:#dfe3e8;"></div>
<svg style="left:677px;top:374px" width="4" height="3" viewBox="0 0 4 3"><path d="M0.3 0.3 L3.3 0.3 L1.8 2.4 Z" fill="#333"/></svg>
<div class="t" style="left:234.30px;top:382.24px;font-size:7.4px;color:#000;transform:scaleX(0.9900);">Cosmo Kings</div>
<div class="t" style="left:344.32px;top:383.46px;font-size:6.9px;color:#000;transform:scaleX(1.0000);">99</div>
<div class="t" style="left:404.76px;top:383.46px;font-size:6.9px;color:#000;transform:scaleX(1.0000);">8</div>
<div class="t" style="left:468.92px;top:383.46px;font-size:6.9px;color:#000;transform:scaleX(1.0000);">12</div>
<div class="t" style="left:519.62px;top:383.46px;font-size:6.9px;color:#000;transform:scaleX(1.0000);">14</div>
<div class="t" style="left:581.19px;top:383.46px;font-size:6.9px;color:#000;transform:scaleX(1.0000);">68.16%</div>
<div class="t" style="left:658.59px;top:383.46px;font-size:6.9px;color:#000;transform:scaleX(1.0000);">35.45%</div>
<div class="t" style="left:234.30px;top:393.24px;font-size:7.4px;color:#333;transform:scaleX(0.9900);">Meteor Rockets</div>
<div class="t" style="left:340.49px;top:394.46px;font-size:6.9px;color:#333;transform:scaleX(1.0000);">123</div>
<div class="t" style="left:404.76px;top:394.46px;font-size:6.9px;color:#333;transform:scaleX(1.0000);">9</div>
<div class="t" style="left:468.92px;top:394.46px;font-size:6.9px;color:#333;transform:scaleX(1.0000);">15</div>
<div class="t" style="left:519.62px;top:394.46px;font-size:6.9px;color:#333;transform:scaleX(1.0000);">16</div>
<div class="t" style="left:581.19px;top:394.46px;font-size:6.9px;color:#333;transform:scaleX(1.0000);">59.67%</div>
<div class="t" style="left:658.59px;top:394.46px;font-size:6.9px;color:#333;transform:scaleX(1.0000);">33.61%</div>
<div style="left:223px;top:402px;width:462px;height:10px;background:linear-gradient(#f3f4f6 0,#f3f4f6 50%,#e6e8eb 50%,#e6e8eb 100%);box-sizing:border-box;border-top:1px solid #dcdde0;"></div>
<div class="t" style="left:225.50px;top:404.20px;font-size:6.5px;color:#5f6e80;transform:scaleX(0.8040);">Record:</div>
<svg style="left:247px;top:405px" width="5" height="5" viewBox="0 0 5 5"><rect x="0" y="0" width="0.8" height="4.1" fill="#8a8a8a"/><path d="M3.9 0 L1.3 2.05 L3.9 4.1 Z" fill="#3a3a3a"/></svg>
<svg style="left:256px;top:405px" width="3" height="4" viewBox="0 0 3 4"><path d="M2.5 0 L0 2 L2.5 4 Z" fill="#bbb"/></svg>
<div style="left:262.7px;top:402.4px;width:25.8px;height:9.2px;background:#fff;box-sizing:border-box;border:1px solid #e2e2e2;"></div>
<div class="t" style="left:263.50px;top:404.97px;font-size:6.3px;color:#222;transform:scaleX(0.9198);">1 of 2</div>
<svg style="left:293px;top:405px" width="3" height="4" viewBox="0 0 3 4"><path d="M0 0 L2.5 2 L0 4 Z" fill="#333"/></svg>
<svg style="left:302px;top:405px" width="5" height="5" viewBox="0 0 5 5"><path d="M0.2 0.3 L2.8 2.1 L0.2 3.9 Z" fill="#333"/><rect x="3.3" y="0.2" width="0.8" height="3.8" fill="#444"/></svg>
<svg style="left:309.5px;top:404.5px" width="6" height="5" viewBox="0 0 6 5"><path d="M0.2 0.8 L2.5 2.5 L0.2 4.2 Z" fill="#ccc"/><rect x="3.2" y="1" width="2.5" height="3" fill="#f1d9b5"/></svg>
<div style="left:318px;top:403px;width:1px;height:8px;background:#dcdcdc;"></div>
<svg style="left:323.5px;top:403px" width="9" height="9" viewBox="0 0 9 9"><path d="M0.5 0.5 L8.3 0.5 L5.2 4.3 L5.2 8.5 L3.6 7.6 L3.6 4.3 Z" fill="none" stroke="#a8a8a8" stroke-width="0.8"/><path d="M5.5 6 L8 8.5 M8 6 L5.5 8.5" stroke="#a8a8a8" stroke-width="0.7"/></svg>
<div class="t" style="left:333.60px;top:404.72px;font-size:6px;color:#c5c5c5;transform:scaleX(0.9394);">No Filter</div>
<div style="left:360px;top:403px;width:1px;height:8px;background:#dcdcdc;"></div>
<div style="left:363px;top:402.4px;width:38px;height:9.2px;background:#fff;box-sizing:border-box;border:1px solid #d6d6d6;"></div>
<div class="t" style="left:364.20px;top:404.97px;font-size:6.3px;color:#333;transform:scaleX(0.8265);">Search</div>
<div style="left:418px;top:403px;width:1px;height:8px;background:#e0e0e0;"></div>
<div class="t" style="left:223.50px;top:422.90px;font-size:10.4px;color:#5f5f5f;transform:scaleX(0.8930);">Game 5 Results</div>
<div style="left:222.5px;top:440px;width:463.0px;height:42.8px;background:#e9ebee;box-sizing:border-box;border:1px solid #c6c9cd;"></div>
<div style="left:223px;top:440.5px;width:460px;height:10.5px;background:#dfe3e8;"></div>
<div style="left:296.9px;top:441px;width:1px;height:10px;background:#cfd3d8;"></div>
<div style="left:352.5px;top:441px;width:1px;height:10px;background:#cfd3d8;"></div>
<div style="left:409.1px;top:441px;width:1px;height:10px;background:#cfd3d8;"></div>
<div style="left:477.1px;top:441px;width:1px;height:10px;background:#cfd3d8;"></div>
<div style="left:533.0px;top:441px;width:1px;height:10px;background:#cfd3d8;"></div>
<div style="left:605.1px;top:441px;width:1px;height:10px;background:#cfd3d8;"></div>
<div style="left:223px;top:451px;width:10px;height:21px;background:#dfe3e8;"></div>
<div style="left:223px;top:461px;width:10px;height:1px;background:#cfd3d8;"></div>
<div style="left:233px;top:451px;width:450px;height:10px;background:#a3cdf0;"></div>
<div style="left:233px;top:461px;width:450px;height:1px;background:#dde1e6;"></div>
<div style="left:233px;top:462px;width:450px;height:10px;background:#f2f2f2;"></div>
<div style="left:233px;top:472px;width:450px;height:1px;background:#dde1e6;"></div>
<div style="left:296.9px;top:462px;width:1px;height:10px;background:#e2e2e2;"></div>
<div style="left:352.5px;top:462px;width:1px;height:10px;background:#e2e2e2;"></div>
<div style="left:409.1px;top:462px;width:1px;height:10px;background:#e2e2e2;"></div>
<div style="left:477.1px;top:462px;width:1px;height:10px;background:#e2e2e2;"></div>
<div style="left:533.0px;top:462px;width:1px;height:10px;background:#e2e2e2;"></div>
<div style="left:605.1px;top:462px;width:1px;height:10px;background:#e2e2e2;"></div>
<div style="left:233px;top:451px;width:64.39999999999998px;height:10px;background:#fff;"></div>
<div style="left:287.9px;top:451.5px;width:8px;height:9px;background:#fff;box-sizing:border-box;border-left:1px solid #e6e6e6;"></div>
<svg style="left:289.9px;top:454.5px" width="5" height="3" viewBox="0 0 5 3"><polyline points="0.5,0.5 2.5,2.5 4.5,0.5" fill="none" stroke="#aaa" stroke-width="0.6"/></svg>
<div style="left:297.9px;top:462.2px;width:54.60000000000002px;height:9.6px;background:#9bbb59;"></div>
<div class="t" style="left:253.59px;top:442.48px;font-size:7.7px;color:#3a3a3a;transform:scaleX(0.9150);">Team</div>
<svg style="left:291.4px;top:445px" width="4" height="3" viewBox="0 0 4 3"><path d="M0.3 0.3 L3.3 0.3 L1.8 2.4 Z" fill="#333"/></svg>
<div class="t" style="left:299.70px;top:442.48px;font-size:7.7px;color:#3a3a3a;transform:scaleX(0.9150);">SumOfPoints</div>
<div style="left:344px;top:441px;width:8.5px;height:10px;background:#dfe3e8;"></div>
<svg style="left:347px;top:445px" width="4" height="3" viewBox="0 0 4 3"><path d="M0.3 0.3 L3.3 0.3 L1.8 2.4 Z" fill="#333"/></svg>
<div class="t" style="left:355.30px;top:442.48px;font-size:7.7px;color:#3a3a3a;transform:scaleX(0.9150);">SumOfAssists</div>
<div style="left:400.6px;top:441px;width:8.5px;height:10px;background:#dfe3e8;"></div>
<svg style="left:403.6px;top:445px" width="4" height="3" viewBox="0 0 4 3"><path d="M0.3 0.3 L3.3 0.3 L1.8 2.4 Z" fill="#333"/></svg>
<div class="t" style="left:411.90px;top:442.48px;font-size:7.7px;color:#3a3a3a;transform:scaleX(0.9150);">SumOfRebounds</div>
<div style="left:468.6px;top:441px;width:8.5px;height:10px;background:#dfe3e8;"></div>
<svg style="left:471.6px;top:445px" width="4" height="3" viewBox="0 0 4 3"><path d="M0.3 0.3 L3.3 0.3 L1.8 2.4 Z" fill="#333"/></svg>
<div class="t" style="left:479.90px;top:442.48px;font-size:7.7px;color:#3a3a3a;transform:scaleX(0.9150);">SumOfTurnov</div>
<div style="left:524.5px;top:441px;width:8.5px;height:10px;background:#dfe3e8;"></div>
<svg style="left:527.5px;top:445px" width="4" height="3" viewBox="0 0 4 3"><path d="M0.3 0.3 L3.3 0.3 L1.8 2.4 Z" fill="#333"/></svg>
<div class="t" style="left:535.80px;top:442.48px;font-size:7.7px;color:#3a3a3a;transform:scaleX(0.9150);">AvgOfFree Throw %</div>
<div style="left:596.6px;top:441px;width:8.5px;height:10px;background:#dfe3e8;"></div>
<svg style="left:599.6px;top:445px" width="4" height="3" viewBox="0 0 4 3"><path d="M0.3 0.3 L3.3 0.3 L1.8 2.4 Z" fill="#333"/></svg>
<div class="t" style="left:607.90px;top:442.48px;font-size:7.7px;color:#3a3a3a;transform:scaleX(0.9150);">AvgOfThree Point %</div>
<div style="left:674px;top:441px;width:8.5px;height:10px;background:#dfe3e8;"></div>
<svg style="left:677px;top:445px" width="4" height="3" viewBox="0 0 4 3"><path d="M0.3 0.3 L3.3 0.3 L1.8 2.4 Z" fill="#333"/></svg>
<div class="t" style="left:234.30px;top:453.24px;font-size:7.4px;color:#000;transform:scaleX(0.9900);">Astro Hawks</div>
<div class="t" style="left:344.32px;top:454.46px;font-size:6.9px;color:#000;transform:scaleX(1.0000);">85</div>
<div class="t" style="left:400.92px;top:454.46px;font-size:6.9px;color:#000;transform:scaleX(1.0000);">10</div>
<div class="t" style="left:468.92px;top:454.46px;font-size:6.9px;color:#000;transform:scaleX(1.0000);">14</div>
<div class="t" style="left:524.82px;top:454.46px;font-size:6.9px;color:#000;transform:scaleX(1.0000);">15</div>
<div class="t" style="left:581.19px;top:454.46px;font-size:6.9px;color:#000;transform:scaleX(1.0000);">70.53%</div>
<div class="t" style="left:658.59px;top:454.46px;font-size:6.9px;color:#000;transform:scaleX(1.0000);">37.17%</div>
<div class="t" style="left:234.30px;top:464.24px;font-size:7.4px;color:#333;transform:scaleX(0.9900);">Meteor Rockets</div>
<div class="t" style="left:341.00px;top:465.46px;font-size:6.9px;color:#333;transform:scaleX(1.0000);">118</div>
<div class="t" style="left:404.76px;top:465.46px;font-size:6.9px;color:#333;transform:scaleX(1.0000);">6</div>
<div class="t" style="left:468.92px;top:465.46px;font-size:6.9px;color:#333;transform:scaleX(1.0000);">13</div>
<div class="t" style="left:528.66px;top:465.46px;font-size:6.9px;color:#333;transform:scaleX(1.0000);">8</div>
<div class="t" style="left:581.19px;top:465.46px;font-size:6.9px;color:#333;transform:scaleX(1.0000);">62.39%</div>
<div class="t" style="left:658.59px;top:465.46px;font-size:6.9px;color:#333;transform:scaleX(1.0000);">36.25%</div>
<div style="left:223px;top:473px;width:462px;height:10px;background:linear-gradient(#f3f4f6 0,#f3f4f6 50%,#e6e8eb 50%,#e6e8eb 100%);box-sizing:border-box;border-top:1px solid #dcdde0;"></div>
<div class="t" style="left:225.50px;top:475.20px;font-size:6.5px;color:#5f6e80;transform:scaleX(0.8040);">Record:</div>
<svg style="left:247px;top:476px" width="5" height="5" viewBox="0 0 5 5"><rect x="0" y="0" width="0.8" height="4.1" fill="#8a8a8a"/><path d="M3.9 0 L1.3 2.05 L3.9 4.1 Z" fill="#3a3a3a"/></svg>
<svg style="left:256px;top:476px" width="3" height="4" viewBox="0 0 3 4"><path d="M2.5 0 L0 2 L2.5 4 Z" fill="#bbb"/></svg>
<div style="left:262.7px;top:473.4px;width:25.8px;height:9.2px;background:#fff;box-sizing:border-box;border:1px solid #e2e2e2;"></div>
<div class="t" style="left:263.50px;top:475.97px;font-size:6.3px;color:#222;transform:scaleX(0.9198);">1 of 2</div>
<svg style="left:293px;top:476px" width="3" height="4" viewBox="0 0 3 4"><path d="M0 0 L2.5 2 L0 4 Z" fill="#333"/></svg>
<svg style="left:302px;top:476px" width="5" height="5" viewBox="0 0 5 5"><path d="M0.2 0.3 L2.8 2.1 L0.2 3.9 Z" fill="#333"/><rect x="3.3" y="0.2" width="0.8" height="3.8" fill="#444"/></svg>
<svg style="left:309.5px;top:475.5px" width="6" height="5" viewBox="0 0 6 5"><path d="M0.2 0.8 L2.5 2.5 L0.2 4.2 Z" fill="#ccc"/><rect x="3.2" y="1" width="2.5" height="3" fill="#f1d9b5"/></svg>
<div style="left:318px;top:474px;width:1px;height:8px;background:#dcdcdc;"></div>
<svg style="left:323.5px;top:474px" width="9" height="9" viewBox="0 0 9 9"><path d="M0.5 0.5 L8.3 0.5 L5.2 4.3 L5.2 8.5 L3.6 7.6 L3.6 4.3 Z" fill="none" stroke="#a8a8a8" stroke-width="0.8"/><path d="M5.5 6 L8 8.5 M8 6 L5.5 8.5" stroke="#a8a8a8" stroke-width="0.7"/></svg>
<div class="t" style="left:333.60px;top:475.72px;font-size:6px;color:#c5c5c5;transform:scaleX(0.9394);">No Filter</div>
<div style="left:360px;top:474px;width:1px;height:8px;background:#dcdcdc;"></div>
<div style="left:363px;top:473.4px;width:38px;height:9.2px;background:#fff;box-sizing:border-box;border:1px solid #d6d6d6;"></div>
<div class="t" style="left:364.20px;top:475.97px;font-size:6.3px;color:#333;transform:scaleX(0.8265);">Search</div>
<div style="left:418px;top:474px;width:1px;height:8px;background:#e0e0e0;"></div>
<div class="t" style="left:223.50px;top:488.40px;font-size:10.4px;color:#5f5f5f;transform:scaleX(0.8930);">Game 6 Results</div>
<div style="left:190px;top:494px;width:823px;height:12px;background:#fff;"></div>
<div style="left:199px;top:127px;width:1px;height:366.5px;background:#7a7a7a;"></div>
<div style="left:190px;top:505.8px;width:824px;height:9.7px;background:linear-gradient(#f3f4f6 0,#f3f4f6 52%,#e6e8eb 52%,#e6e8eb 100%);box-sizing:border-box;border-top:1px solid #d8d9dc;"></div>
<div style="left:1014px;top:506px;width:8px;height:9.5px;background:#c8c8c8;"></div>
<div class="t" style="left:191.60px;top:508.20px;font-size:6.5px;color:#5f6e80;transform:scaleX(0.8040);">Record:</div>
<svg style="left:214px;top:509px" width="5" height="5" viewBox="0 0 5 5"><rect x="0" y="0" width="0.8" height="4.1" fill="#8a8a8a"/><path d="M3.9 0 L1.3 2.05 L3.9 4.1 Z" fill="#3a3a3a"/></svg>
<svg style="left:222px;top:509px" width="3" height="4" viewBox="0 0 3 4"><path d="M2.5 0 L0 2 L2.5 4 Z" fill="#bbb"/></svg>
<div style="left:228.3px;top:506.8px;width:26.7px;height:8.2px;background:#fff;box-sizing:border-box;border:1px solid #d8d8d8;"></div>
<div class="t" style="left:229.30px;top:508.97px;font-size:6.3px;color:#222;transform:scaleX(0.9198);">1 of 1</div>
<svg style="left:259px;top:509px" width="3" height="4" viewBox="0 0 3 4"><path d="M0 0 L2.5 2 L0 4 Z" fill="#bbb"/></svg>
<svg style="left:268px;top:509px" width="5" height="5" viewBox="0 0 5 5"><path d="M0.2 0.3 L2.8 2.1 L0.2 3.9 Z" fill="#333"/><rect x="3.3" y="0.2" width="0.8" height="3.8" fill="#444"/></svg>
<svg style="left:275px;top:508.5px" width="6" height="5" viewBox="0 0 6 5"><path d="M0.2 0.8 L2.5 2.5 L0.2 4.2 Z" fill="#ccc"/><rect x="3.2" y="1" width="2.5" height="3" fill="#f1d9b5"/></svg>
<div style="left:286.5px;top:507px;width:1px;height:8px;background:#dcdcdc;"></div>
<svg style="left:290.5px;top:507px" width="9" height="9" viewBox="0 0 9 9"><path d="M0.5 0.5 L8.3 0.5 L5.2 4.3 L5.2 8.5 L3.6 7.6 L3.6 4.3 Z" fill="none" stroke="#a8a8a8" stroke-width="0.8"/><path d="M5.5 6 L8 8.5 M8 6 L5.5 8.5" stroke="#a8a8a8" stroke-width="0.7"/></svg>
<div class="t" style="left:299.70px;top:509.22px;font-size:6px;color:#c5c5c5;transform:scaleX(0.9394);">No Filter</div>
<div style="left:325.5px;top:507px;width:1px;height:8px;background:#dcdcdc;"></div>
<div style="left:329.4px;top:506.8px;width:37.1px;height:8.2px;background:#fff;box-sizing:border-box;border:1px solid #d0d0d0;"></div>
<div class="t" style="left:330.60px;top:508.97px;font-size:6.3px;color:#333;transform:scaleX(0.8265);">Search</div>
</body></html>
